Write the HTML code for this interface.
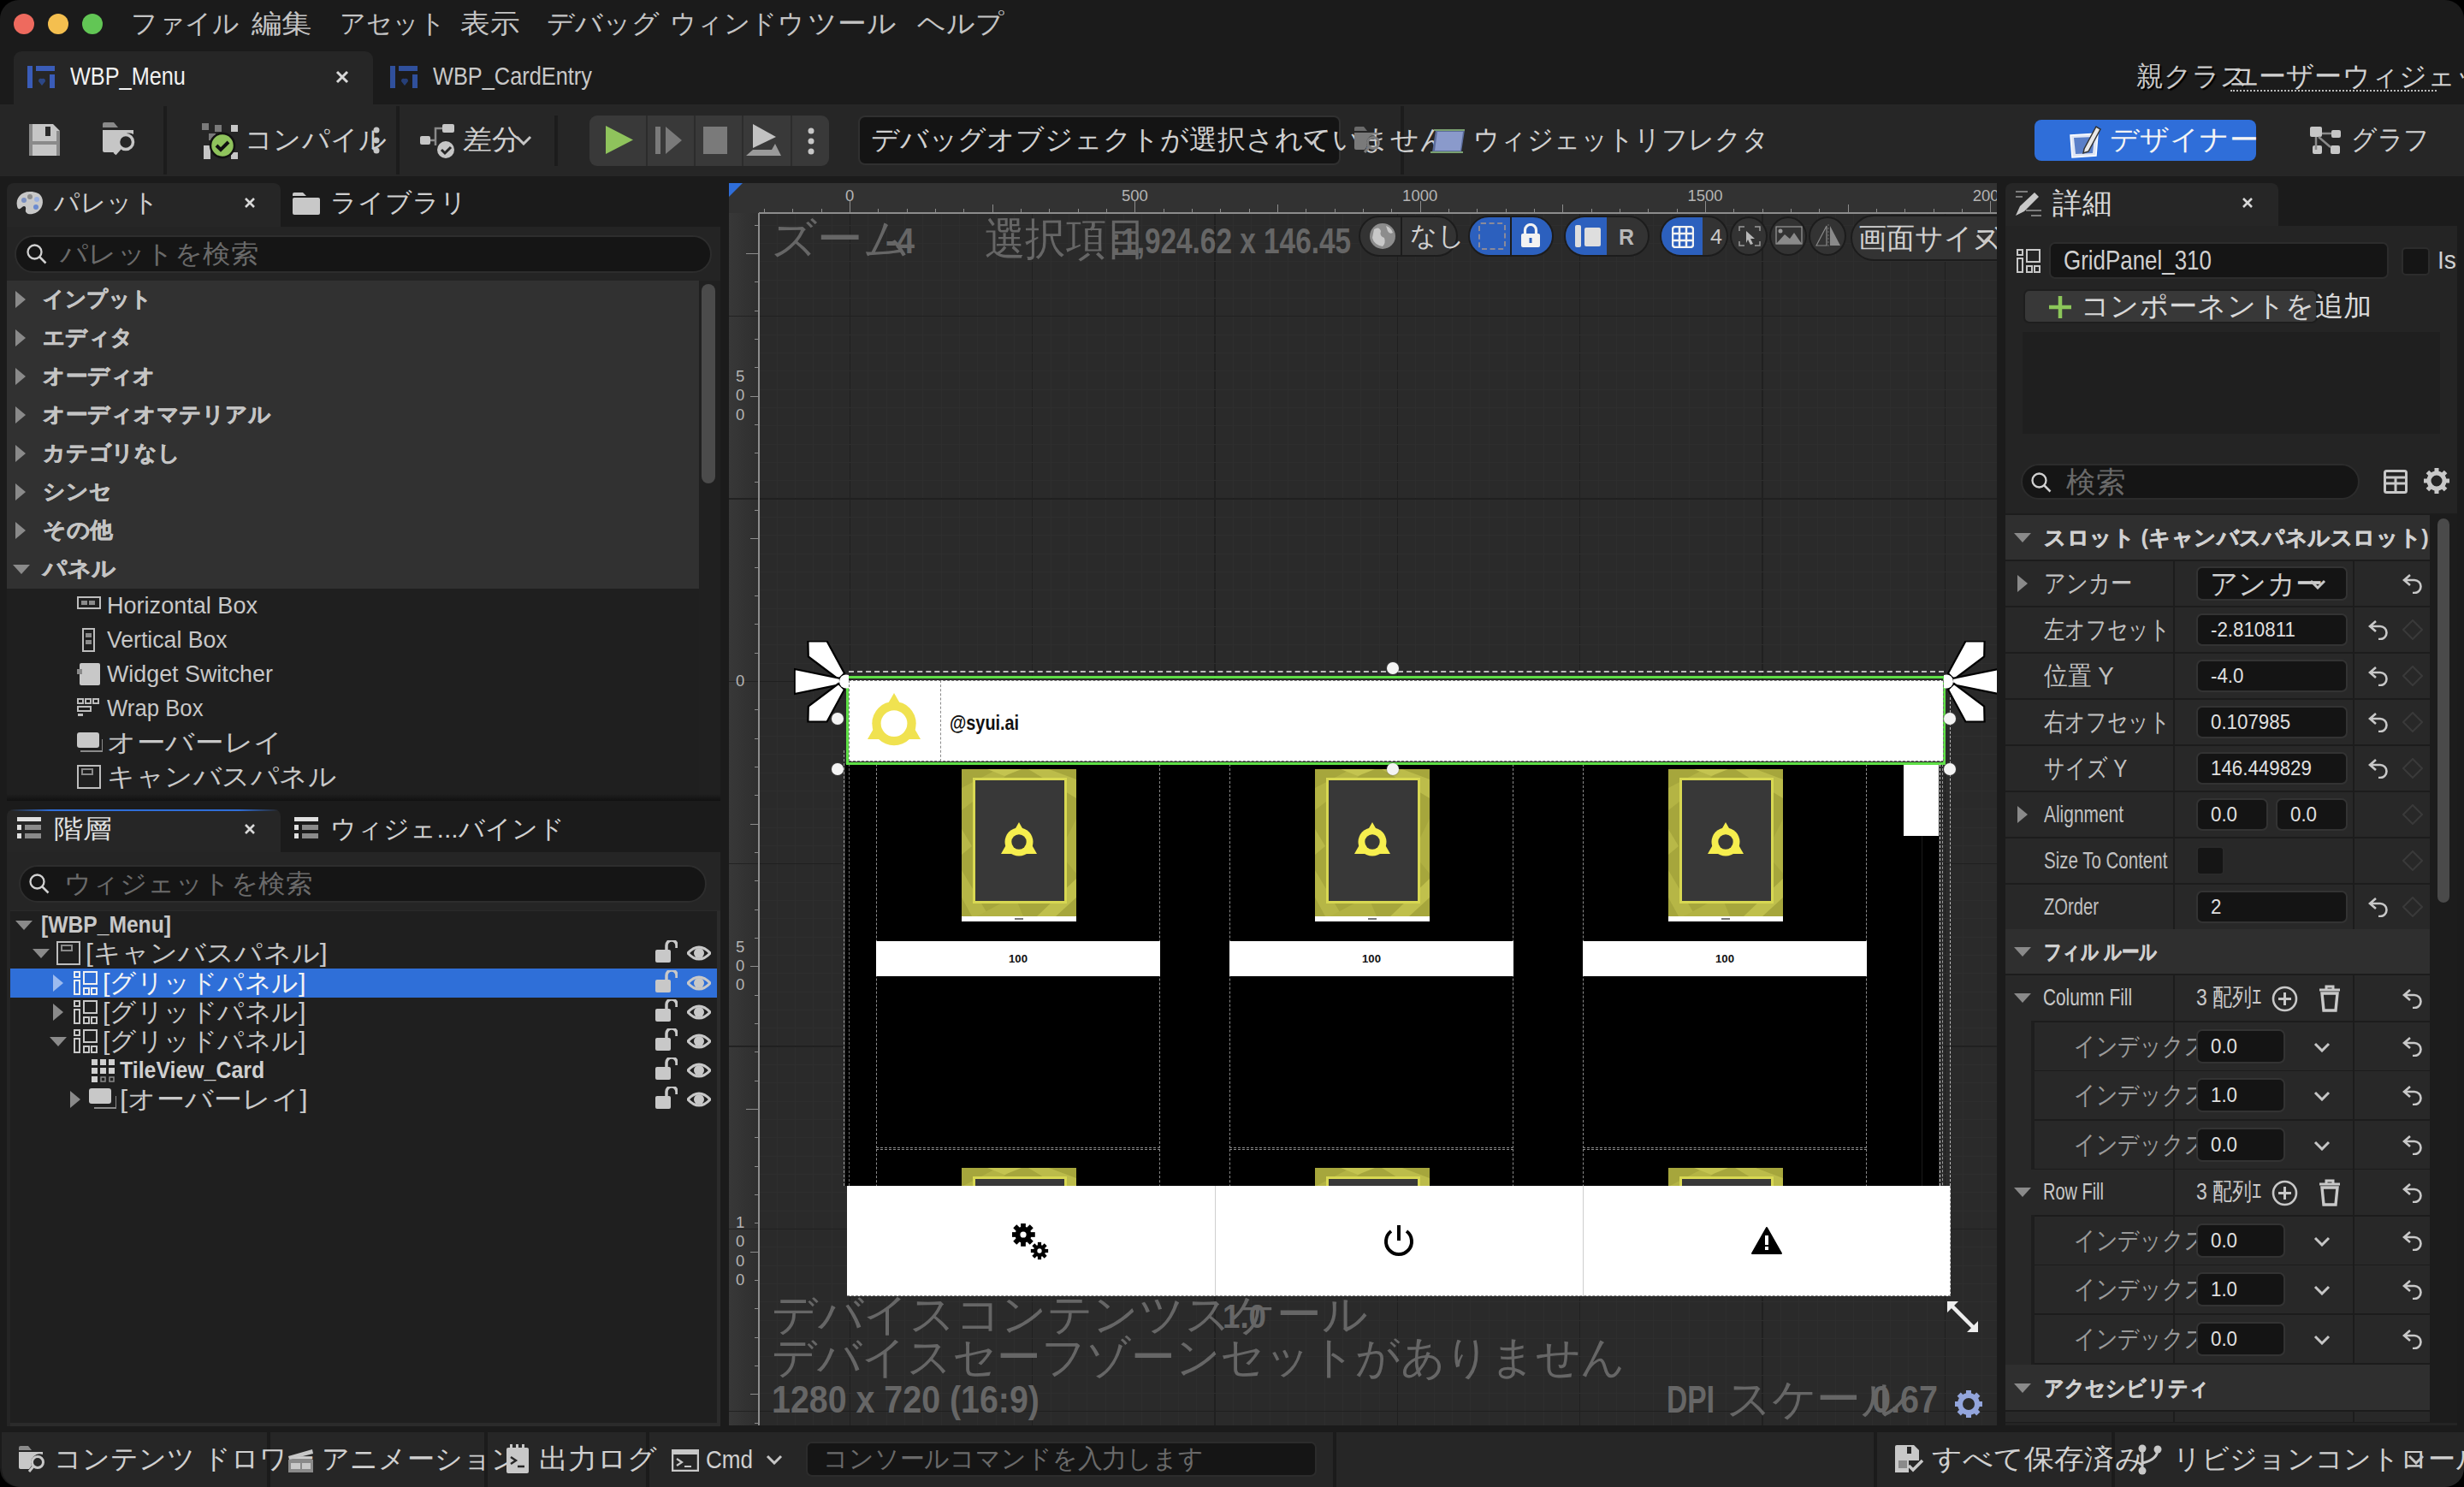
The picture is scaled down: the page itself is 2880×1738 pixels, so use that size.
<!DOCTYPE html>
<html><head><meta charset="utf-8">
<style>
*{margin:0;padding:0;box-sizing:border-box}
html,body{width:2880px;height:1738px;overflow:hidden;background:#000}
body{font-family:"Liberation Sans",sans-serif;color:#c0c0c0;position:relative}
.a{position:absolute}
.t{position:absolute;white-space:nowrap;line-height:1}
#win{position:absolute;left:0;top:0;width:2880px;height:1738px;background:#1b1b1b;border-radius:22px;overflow:hidden}
</style></head>
<body>
<div id="win">
<div class="a" style="left:16px;top:16px;width:24px;height:24px;background:#ee6a5e;border-radius:50%"></div>
<div class="a" style="left:56px;top:16px;width:24px;height:24px;background:#f4bf4f;border-radius:50%"></div>
<div class="a" style="left:96px;top:16px;width:24px;height:24px;background:#62c655;border-radius:50%"></div>
<div class="t " style="left:153.0px;top:12.4px;font-size:31.0px;color:#c4c4c4;transform:scaleX(0.989);transform-origin:0 0;">ファイル</div>
<div class="t " style="left:294.0px;top:12.4px;font-size:31.0px;color:#c4c4c4;transform:scaleX(1.140);transform-origin:0 0;">編集</div>
<div class="t " style="left:397.0px;top:12.4px;font-size:31.0px;color:#c4c4c4;transform:scaleX(0.968);transform-origin:0 0;">アセット</div>
<div class="t " style="left:538.0px;top:12.4px;font-size:31.0px;color:#c4c4c4;transform:scaleX(1.118);transform-origin:0 0;">表示</div>
<div class="t " style="left:639.0px;top:12.4px;font-size:31.0px;color:#c4c4c4;transform:scaleX(1.032);transform-origin:0 0;">デバッグ</div>
<div class="t " style="left:783.0px;top:12.4px;font-size:31.0px;color:#c4c4c4;transform:scaleX(0.981);transform-origin:0 0;">ウィンドウ</div>
<div class="t " style="left:944.0px;top:12.4px;font-size:31.0px;color:#c4c4c4;transform:scaleX(1.090);transform-origin:0 0;">ツール</div>
<div class="t " style="left:1072.0px;top:12.4px;font-size:31.0px;color:#c4c4c4;transform:scaleX(1.061);transform-origin:0 0;">ヘルプ</div>
<div class="a" style="left:16px;top:60px;width:420px;height:64px;background:#262626;border-radius:9px 9px 0 0"></div>
<svg class="a" style="left:32px;top:77px;" width="32" height="26" viewBox="0 0 32 26"><rect x="0" y="0" width="6" height="26" fill="#3a5cb8"/><rect x="10" y="0" width="22" height="6" fill="#3a5cb8"/><rect x="26" y="10" width="6" height="16" fill="#3a5cb8"/><path d="M13 18 q0-4 4-3 q4-1 4 3 l-4 5z" fill="#2c4786"/></svg>
<div class="t " style="left:82.0px;top:75.4px;font-size:29.0px;color:#f2f2f2;transform:scaleX(0.872);transform-origin:0 0;">WBP_Menu</div>
<svg class="a" style="left:392px;top:82px;" width="16" height="16" viewBox="0 0 16 16"><path d="M2 2L14 14M14 2L2 14" stroke="#d8d8d8" stroke-width="3"/></svg>
<svg class="a" style="left:456px;top:77px;" width="32" height="26" viewBox="0 0 32 26"><rect x="0" y="0" width="6" height="26" fill="#30509c"/><rect x="10" y="0" width="22" height="6" fill="#30509c"/><rect x="26" y="10" width="6" height="16" fill="#30509c"/><path d="M13 18 q0-4 4-3 q4-1 4 3 l-4 5z" fill="#263f78"/></svg>
<div class="t " style="left:506.0px;top:75.4px;font-size:29.0px;color:#c8c8c8;transform:scaleX(0.874);transform-origin:0 0;">WBP_CardEntry</div>
<div class="t " style="left:2497.0px;top:72.9px;font-size:32.0px;color:#c8c8c8;transform:scaleX(1.000);transform-origin:0 0;text-shadow:2px 2px 1px #000;">親クラス</div>
<div class="t " style="left:2607.0px;top:72.9px;font-size:32.0px;color:#d0d0d0;transform:scaleX(1.004);transform-origin:0 0;">ユーザーウィジェット</div>
<div class="a" style="left:2607px;top:105px;width:241px;height:0px;background:none;border-top:2px dotted #bbb"></div>
<div class="a" style="left:0px;top:122px;width:2880px;height:84px;background:#262626;"></div>
<div class="a" style="left:191px;top:124px;width:4px;height:80px;background:#1c1c1c;"></div>
<div class="a" style="left:463px;top:124px;width:4px;height:80px;background:#1c1c1c;"></div>
<div class="a" style="left:648px;top:135px;width:4px;height:59px;background:#1c1c1c;"></div>
<div class="a" style="left:1637px;top:124px;width:4px;height:80px;background:#1c1c1c;"></div>
<svg class="a" style="left:34px;top:145px;" width="36" height="37" viewBox="0 0 36 37"><path d="M0 2 q0-2 2-2 h26 l8 8 v27 q0 2-2 2 h-32z" fill="#c6c6c6"/><rect x="0" y="0" width="4" height="37" fill="#8a8a8a"/><rect x="32" y="8" width="4" height="29" fill="#8a8a8a"/><rect x="4" y="20" width="28" height="4" fill="#8a8a8a"/><rect x="19" y="3" width="6" height="11" fill="#2a2a2a"/></svg>
<svg class="a" style="left:120px;top:143px;" width="40" height="42" viewBox="0 0 40 42"><path d="M0 2 q0-2 2-2 h11 l5 6 h-18z" fill="#8a8a8a"/><path d="M0 9 h36 v5 a12 12 0 0 0-16 16 l-4 5 h-14 q-2 0-2-2z" fill="#c6c6c6"/><circle cx="27" cy="23" r="8.5" fill="none" stroke="#c6c6c6" stroke-width="3.5"/><path d="M21 29 l-7 8" stroke="#c6c6c6" stroke-width="4"/></svg>
<svg class="a" style="left:236px;top:144px;" width="42" height="42" viewBox="0 0 42 42"><rect x="0" y="0" width="8" height="8" fill="#7a7a7a"/><rect x="15" y="2" width="8" height="8" fill="#7a7a7a"/><rect x="34" y="2" width="8" height="8" fill="#c6c6c6"/><rect x="8" y="12" width="8" height="8" fill="#7a7a7a"/><rect x="34" y="34" width="8" height="8" fill="#c6c6c6"/><rect x="2" y="26" width="8" height="8" fill="#c6c6c6"/><rect x="2" y="34" width="8" height="8" fill="#c6c6c6"/><circle cx="24" cy="26" r="14" fill="#8fc35c" stroke="#111" stroke-width="2.5"/><path d="M17 26 l5 5 l9-9" fill="none" stroke="#111" stroke-width="4"/></svg>
<div class="t " style="left:286.0px;top:146.9px;font-size:32.0px;color:#d0d0d0;transform:scaleX(1.008);transform-origin:0 0;">コンパイル</div>
<svg class="a" style="left:434px;top:148px;" width="12" height="32" viewBox="0 0 12 32"><circle cx="6" cy="4" r="3.5" fill="#c6c6c6"/><circle cx="6" cy="16" r="3.5" fill="#c6c6c6"/><circle cx="6" cy="28" r="3.5" fill="#c6c6c6"/></svg>
<svg class="a" style="left:491px;top:145px;" width="42" height="40" viewBox="0 0 42 40"><rect x="0" y="14" width="12" height="10" rx="2" fill="#c6c6c6"/><rect x="26" y="0" width="14" height="10" rx="2" fill="#c6c6c6"/><path d="M12 19 h6 v-14 h8 M18 19 v6" fill="none" stroke="#8a8a8a" stroke-width="2.5"/><circle cx="30" cy="30" r="10" fill="#c6c6c6"/><path d="M25 30 l4 4 l7-7" fill="none" stroke="#262626" stroke-width="3"/></svg>
<div class="t " style="left:541.0px;top:146.9px;font-size:32.0px;color:#d0d0d0;transform:scaleX(1.062);transform-origin:0 0;">差分</div>
<svg class="a" style="left:602px;top:158px;" width="20" height="12" viewBox="0 0 20 12"><path d="M2 2 l8 8 l8-8" fill="none" stroke="#c6c6c6" stroke-width="3"/></svg>
<div class="a" style="left:689px;top:135px;width:280px;height:59px;background:#393939;border-radius:9px"></div>
<div class="a" style="left:755px;top:135px;width:2px;height:59px;background:#2c2c2c;"></div>
<div class="a" style="left:811px;top:135px;width:2px;height:59px;background:#2c2c2c;"></div>
<div class="a" style="left:867px;top:135px;width:2px;height:59px;background:#2c2c2c;"></div>
<div class="a" style="left:924px;top:135px;width:2px;height:59px;background:#2c2c2c;"></div>
<svg class="a" style="left:708px;top:146px;" width="32" height="35" viewBox="0 0 32 35"><path d="M0 1 L32 17.5 L0 34z" fill="#8fc35c"/></svg>
<svg class="a" style="left:766px;top:148px;" width="31" height="32" viewBox="0 0 31 32"><rect x="0" y="0" width="6" height="32" fill="#7a7a7a"/><path d="M12 0 L31 16 L12 32z" fill="#7a7a7a"/></svg>
<div class="a" style="left:822px;top:148px;width:28px;height:32px;background:#7a7a7a;"></div>
<svg class="a" style="left:872px;top:145px;" width="42" height="38" viewBox="0 0 42 38"><path d="M8 0 L35 15 L8 28z" fill="#c2c2c2"/><path d="M0 37 L8 30 h22 l4-7 l7 14z" fill="#9a9a9a"/></svg>
<svg class="a" style="left:942px;top:149px;" width="12" height="32" viewBox="0 0 12 32"><circle cx="6" cy="4" r="3.5" fill="#c6c6c6"/><circle cx="6" cy="16" r="3.5" fill="#c6c6c6"/><circle cx="6" cy="28" r="3.5" fill="#c6c6c6"/></svg>
<div class="a" style="left:1003px;top:135px;width:564px;height:58px;background:#141414;border:2px solid #303030;border-radius:8px"></div>
<div class="t " style="left:1018.0px;top:146.9px;font-size:32.0px;color:#d0d0d0;transform:scaleX(1.025);transform-origin:0 0;">デバッグオブジェクトが選択されていません</div>
<svg class="a" style="left:1523px;top:158px;" width="20" height="12" viewBox="0 0 20 12"><path d="M2 2 l8 8 l8-8" fill="none" stroke="#c6c6c6" stroke-width="3"/></svg>
<svg class="a" style="left:1583px;top:148px;" width="32" height="32" viewBox="0 0 32 32"><path d="M0 2 q0-2 2-2 h9 l4 5 h-15z" fill="#6a6a6a"/><path d="M0 7 h28 v3 a10 10 0 0 0-13 13 l-3 4 h-10 q-2 0-2-2z" fill="#7a7a7a"/><circle cx="22" cy="19" r="6.5" fill="none" stroke="#7a7a7a" stroke-width="3"/><path d="M17 24 l-5 6" stroke="#7a7a7a" stroke-width="3"/></svg>
<svg class="a" style="left:1672px;top:148px;" width="42" height="34" viewBox="0 0 42 34"><path d="M6 4 h34 l-4 26 h-34z" fill="#5a6b9a"/><path d="M8 6 h30 l-3 22 h-30z" fill="#8a9acb"/><path d="M0 30 h38 M4 4 h36" stroke="#7aa070" stroke-width="2"/></svg>
<div class="t " style="left:1722.0px;top:146.9px;font-size:32.0px;color:#d0d0d0;transform:scaleX(0.951);transform-origin:0 0;">ウィジェットリフレクタ</div>
<div class="a" style="left:2378px;top:140px;width:259px;height:48px;background:#2f6ed9;border-radius:8px"></div>
<svg class="a" style="left:2418px;top:144px;" width="42" height="42" viewBox="0 0 42 42"><path d="M2 14 l32 -2 l-2 26 l-28 2z" fill="#dfe6f5" stroke="#fff" stroke-width="1.5"/><path d="M6 17 l24-1 l-2 19 l-20 1z" fill="#5a7fc8"/><path d="M18 30 l14-26 l5 3 l-14 26 l-6 2z" fill="#e8e8e8" stroke="#333" stroke-width="1.5"/></svg>
<div class="t " style="left:2466.0px;top:146.9px;font-size:32.0px;color:#f4f4f4;transform:scaleX(1.058);transform-origin:0 0;">デザイナー</div>
<svg class="a" style="left:2700px;top:148px;" width="36" height="32" viewBox="0 0 36 32"><rect x="0" y="0" width="14" height="12" rx="2" fill="#c6c6c6"/><rect x="25" y="4" width="11" height="9" rx="2" fill="#c6c6c6"/><rect x="3" y="22" width="11" height="10" rx="2" fill="#c6c6c6"/><rect x="24" y="22" width="11" height="10" rx="2" fill="#c6c6c6"/><path d="M7 12 v15 M14 8 h11 M10 12 l14 12" stroke="#8a8a8a" stroke-width="2.5" fill="none"/></svg>
<div class="t " style="left:2748.0px;top:146.9px;font-size:32.0px;color:#d0d0d0;transform:scaleX(0.931);transform-origin:0 0;">グラフ</div>
<div class="a" style="left:8px;top:214px;width:320px;height:52px;background:#262626;border-radius:8px 8px 0 0"></div>
<svg class="a" style="left:18px;top:222px;" width="34" height="30" viewBox="0 0 34 30"><path d="M17 2 C6 2 0 10 2 19 C3 24 6 22 8 20 C10 18 13 19 12 23 C11 27 15 29 20 28 C30 26 34 16 31 9 C29 4 24 2 17 2z" fill="#c8c8c8"/><circle cx="10" cy="12" r="3" fill="#7a8fc0"/><circle cx="17" cy="8" r="3" fill="#8a8a8a"/><circle cx="25" cy="11" r="3" fill="#9ab0e0"/><circle cx="24" cy="20" r="3" fill="#6a8ad0"/></svg>
<div class="t " style="left:63.0px;top:221.9px;font-size:30.0px;color:#d0d0d0;transform:scaleX(0.989);transform-origin:0 0;">パレット</div>
<svg class="a" style="left:285px;top:230px;" width="14" height="14" viewBox="0 0 14 14"><path d="M2 2L12 12M12 2L2 12" stroke="#d8d8d8" stroke-width="2.6"/></svg>
<svg class="a" style="left:342px;top:225px;" width="32" height="26" viewBox="0 0 32 26"><path d="M0 2 q0-2 2-2 h10 l4 4 h-16z" fill="#c8c8c8"/><rect x="0" y="6" width="32" height="20" rx="2" fill="#c8c8c8"/></svg>
<div class="t " style="left:386.0px;top:221.9px;font-size:30.0px;color:#d0d0d0;transform:scaleX(1.031);transform-origin:0 0;">ライブラリ</div>
<div class="a" style="left:8px;top:265px;width:834px;height:670px;background:#242424;"></div>
<div class="a" style="left:17px;top:275px;width:815px;height:44px;background:#151515;border:2px solid #2d2d2d;border-radius:22px"></div>
<svg class="a" style="left:30px;top:284px;" width="25" height="25" viewBox="0 0 25 25"><circle cx="10.5" cy="10.5" r="8" fill="none" stroke="#d0d0d0" stroke-width="2.3"/><path d="M16.5 16.5 l7 7" stroke="#d0d0d0" stroke-width="2.5"/></svg>
<div class="t " style="left:70.0px;top:281.9px;font-size:30.0px;color:#6a6a6a;transform:scaleX(1.079);transform-origin:0 0;">パレットを検索</div>
<div class="a" style="left:8px;top:328px;width:809px;height:360px;background:#313131;"></div>
<svg class="a" style="left:18px;top:340px;" width="12" height="20" viewBox="0 0 12 20"><path d="M0 0 L12 10 L0 20z" fill="#8a8a8a"/></svg>
<div class="t " style="left:50.0px;top:337.4px;font-size:25.0px;color:#c4c4c4;font-weight:700;transform:scaleX(0.981);transform-origin:0 0;"><span style="-webkit-text-stroke:0.56px #c4c4c4">インプット</span></div>
<svg class="a" style="left:18px;top:385px;" width="12" height="20" viewBox="0 0 12 20"><path d="M0 0 L12 10 L0 20z" fill="#8a8a8a"/></svg>
<div class="t " style="left:50.0px;top:382.4px;font-size:25.0px;color:#c4c4c4;font-weight:700;transform:scaleX(1.013);transform-origin:0 0;"><span style="-webkit-text-stroke:0.56px #c4c4c4">エディタ</span></div>
<svg class="a" style="left:18px;top:430px;" width="12" height="20" viewBox="0 0 12 20"><path d="M0 0 L12 10 L0 20z" fill="#8a8a8a"/></svg>
<div class="t " style="left:50.0px;top:427.4px;font-size:25.0px;color:#c4c4c4;font-weight:700;transform:scaleX(1.024);transform-origin:0 0;"><span style="-webkit-text-stroke:0.56px #c4c4c4">オーディオ</span></div>
<svg class="a" style="left:18px;top:475px;" width="12" height="20" viewBox="0 0 12 20"><path d="M0 0 L12 10 L0 20z" fill="#8a8a8a"/></svg>
<div class="t " style="left:50.0px;top:472.4px;font-size:25.0px;color:#c4c4c4;font-weight:700;transform:scaleX(1.029);transform-origin:0 0;"><span style="-webkit-text-stroke:0.56px #c4c4c4">オーディオマテリアル</span></div>
<svg class="a" style="left:18px;top:520px;" width="12" height="20" viewBox="0 0 12 20"><path d="M0 0 L12 10 L0 20z" fill="#8a8a8a"/></svg>
<div class="t " style="left:50.0px;top:517.4px;font-size:25.0px;color:#c4c4c4;font-weight:700;transform:scaleX(1.031);transform-origin:0 0;"><span style="-webkit-text-stroke:0.56px #c4c4c4">カテゴリなし</span></div>
<svg class="a" style="left:18px;top:565px;" width="12" height="20" viewBox="0 0 12 20"><path d="M0 0 L12 10 L0 20z" fill="#8a8a8a"/></svg>
<div class="t " style="left:50.0px;top:562.4px;font-size:25.0px;color:#c4c4c4;font-weight:700;transform:scaleX(1.031);transform-origin:0 0;"><span style="-webkit-text-stroke:0.56px #c4c4c4">シンセ</span></div>
<svg class="a" style="left:18px;top:610px;" width="12" height="20" viewBox="0 0 12 20"><path d="M0 0 L12 10 L0 20z" fill="#8a8a8a"/></svg>
<div class="t " style="left:50.0px;top:607.4px;font-size:25.0px;color:#c4c4c4;font-weight:700;transform:scaleX(1.067);transform-origin:0 0;"><span style="-webkit-text-stroke:0.56px #c4c4c4">その他</span></div>
<svg class="a" style="left:15px;top:660px;" width="20" height="11" viewBox="0 0 20 11"><path d="M0 0 L20 0 L10 11z" fill="#8a8a8a"/></svg>
<div class="t " style="left:50.0px;top:652.4px;font-size:25.0px;color:#c4c4c4;font-weight:700;transform:scaleX(1.102);transform-origin:0 0;"><span style="-webkit-text-stroke:0.56px #c4c4c4">パネル</span></div>
<div class="a" style="left:817px;top:328px;width:25px;height:607px;background:#202020;"></div>
<div class="a" style="left:820px;top:332px;width:16px;height:233px;background:#4b4b4b;border-radius:8px"></div>
<div class="a" style="left:8px;top:688px;width:809px;height:247px;background:#1f1f1f;"></div>
<svg class="a" style="left:90px;top:694px;" width="30" height="28" viewBox="0 0 30 28"><rect x="1" y="4" width="26" height="13" fill="none" stroke="#bdbdbd" stroke-width="2"/><rect x="5" y="8" width="7" height="5" fill="#8a8a8a"/><rect x="14" y="8" width="7" height="5" fill="#8a8a8a"/></svg>
<div class="t " style="left:125.0px;top:694.2px;font-size:27.5px;color:#c8c8c8;transform:scaleX(0.984);transform-origin:0 0;">Horizontal Box</div>
<svg class="a" style="left:90px;top:734px;" width="30" height="28" viewBox="0 0 30 28"><rect x="7" y="1" width="13" height="26" fill="none" stroke="#bdbdbd" stroke-width="2"/><rect x="10" y="6" width="7" height="5" fill="#8a8a8a"/><rect x="10" y="14" width="7" height="5" fill="#8a8a8a"/></svg>
<div class="t " style="left:125.0px;top:734.2px;font-size:27.5px;color:#c8c8c8;transform:scaleX(0.968);transform-origin:0 0;">Vertical Box</div>
<svg class="a" style="left:90px;top:774px;" width="30" height="28" viewBox="0 0 30 28"><rect x="3" y="1" width="24" height="26" rx="2" fill="#c8c8c8"/><rect x="0" y="8" width="6" height="6" fill="#8a8a8a"/></svg>
<div class="t " style="left:125.0px;top:774.2px;font-size:27.5px;color:#c8c8c8;transform:scaleX(0.976);transform-origin:0 0;">Widget Switcher</div>
<svg class="a" style="left:90px;top:814px;" width="30" height="28" viewBox="0 0 30 28"><rect x="1" y="3" width="6" height="5" fill="none" stroke="#bdbdbd" stroke-width="2"/><rect x="10" y="3" width="6" height="5" fill="none" stroke="#bdbdbd" stroke-width="2"/><rect x="19" y="3" width="6" height="5" fill="none" stroke="#bdbdbd" stroke-width="2"/><rect x="1" y="12" width="15" height="5" fill="none" stroke="#bdbdbd" stroke-width="2"/><rect x="1" y="20" width="6" height="3" fill="#bdbdbd"/></svg>
<div class="t " style="left:125.0px;top:814.2px;font-size:27.5px;color:#c8c8c8;transform:scaleX(0.936);transform-origin:0 0;">Wrap Box</div>
<svg class="a" style="left:90px;top:854px;" width="30" height="28" viewBox="0 0 30 28"><rect x="0" y="2" width="26" height="18" rx="3" fill="#c8c8c8"/><path d="M4 24 h26 v-14" fill="none" stroke="#8a8a8a" stroke-width="2"/></svg>
<div class="t " style="left:125.0px;top:852.9px;font-size:30.0px;color:#c8c8c8;transform:scaleX(1.119);transform-origin:0 0;">オーバーレイ</div>
<svg class="a" style="left:90px;top:894px;" width="30" height="28" viewBox="0 0 30 28"><rect x="1" y="1" width="26" height="26" fill="none" stroke="#bdbdbd" stroke-width="2"/><rect x="6" y="5" width="12" height="6" fill="none" stroke="#8a8a8a" stroke-width="2"/></svg>
<div class="t " style="left:125.0px;top:892.9px;font-size:30.0px;color:#c8c8c8;transform:scaleX(1.083);transform-origin:0 0;">キャンバスパネル</div>
<div class="a" style="left:8px;top:928px;width:834px;height:8px;background:linear-gradient(#1f1f1f00,#111);"></div>
<div class="a" style="left:8px;top:946px;width:320px;height:50px;background:#262626;border-radius:8px 8px 0 0"></div>
<div class="a" style="left:12px;top:946px;width:314px;height:2px;background:linear-gradient(to right,#2f6ed900,#2f6ed9 15%,#2f6ed9 85%,#2f6ed900);"></div>
<svg class="a" style="left:20px;top:955px;" width="28" height="26" viewBox="0 0 28 26"><rect x="0" y="0" width="28" height="5" fill="#e0e0e0"/><rect x="0" y="9" width="5" height="6" fill="#e0e0e0"/><rect x="9" y="9" width="19" height="6" fill="#8a8a8a"/><rect x="0" y="19" width="5" height="6" fill="#e0e0e0"/><rect x="9" y="19" width="19" height="6" fill="#8a8a8a"/></svg>
<div class="t " style="left:63.0px;top:953.9px;font-size:30.0px;color:#e0e0e0;transform:scaleX(1.133);transform-origin:0 0;">階層</div>
<svg class="a" style="left:285px;top:962px;" width="14" height="14" viewBox="0 0 14 14"><path d="M2 2L12 12M12 2L2 12" stroke="#d8d8d8" stroke-width="2.6"/></svg>
<svg class="a" style="left:344px;top:955px;" width="28" height="26" viewBox="0 0 28 26"><rect x="0" y="0" width="28" height="5" fill="#e0e0e0"/><rect x="0" y="9" width="5" height="6" fill="#e0e0e0"/><rect x="9" y="9" width="19" height="6" fill="#8a8a8a"/><rect x="0" y="19" width="5" height="6" fill="#e0e0e0"/><rect x="9" y="19" width="19" height="6" fill="#8a8a8a"/></svg>
<div class="t " style="left:386.0px;top:953.9px;font-size:30.0px;color:#d0d0d0;transform:scaleX(1.005);transform-origin:0 0;">ウィジェ...バインド</div>
<div class="a" style="left:8px;top:996px;width:834px;height:671px;background:#252525;"></div>
<div class="a" style="left:22px;top:1011px;width:804px;height:44px;background:#151515;border:2px solid #2d2d2d;border-radius:22px"></div>
<svg class="a" style="left:33px;top:1020px;" width="25" height="25" viewBox="0 0 25 25"><circle cx="10.5" cy="10.5" r="8" fill="none" stroke="#d0d0d0" stroke-width="2.3"/><path d="M16.5 16.5 l7 7" stroke="#d0d0d0" stroke-width="2.5"/></svg>
<div class="t " style="left:75.0px;top:1017.9px;font-size:30.0px;color:#6a6a6a;transform:scaleX(1.047);transform-origin:0 0;">ウィジェットを検索</div>
<div class="a" style="left:12px;top:1064px;width:830px;height:603px;background:#1f1f1f;border-right:4px solid #2b2b2b;border-bottom:4px solid #2b2b2b;border-top:1px solid #2a2a2a"></div>
<svg class="a" style="left:18px;top:1076px;" width="20" height="11" viewBox="0 0 20 11"><path d="M0 0 L20 0 L10 11z" fill="#8a8a8a"/></svg>
<div class="t " style="left:48.0px;top:1066.9px;font-size:28.0px;color:#c8c8c8;font-weight:700;transform:scaleX(0.880);transform-origin:0 0;">[WBP_Menu]</div>
<svg class="a" style="left:38px;top:1109px;" width="20" height="11" viewBox="0 0 20 11"><path d="M0 0 L20 0 L10 11z" fill="#8a8a8a"/></svg>
<svg class="a" style="left:66px;top:1100px;" width="28" height="28" viewBox="0 0 28 28"><rect x="1" y="1" width="26" height="26" fill="none" stroke="#bdbdbd" stroke-width="2"/><rect x="6" y="5" width="12" height="6" fill="none" stroke="#8a8a8a" stroke-width="2"/></svg>
<div class="t " style="left:100.0px;top:1098.9px;font-size:30.0px;color:#c8c8c8;transform:scaleX(1.068);transform-origin:0 0;">[キャンバスパネル]</div>
<div class="a" style="left:12px;top:1132px;width:826px;height:34px;background:#2f6fd8;"></div>
<svg class="a" style="left:62px;top:1139px;" width="12" height="20" viewBox="0 0 12 20"><path d="M0 0 L12 10 L0 20z" fill="#9cbbef"/></svg>
<svg class="a" style="left:86px;top:1135px;" width="28" height="28" viewBox="0 0 28 28"><rect x="1" y="1" width="6" height="6" fill="none" stroke="#f0f0f0" stroke-width="2"/><rect x="12" y="1" width="15" height="14" fill="none" stroke="#f0f0f0" stroke-width="2"/><rect x="1" y="11" width="6" height="16" fill="none" stroke="#f0f0f0" stroke-width="2"/><rect x="12" y="20" width="6" height="7" fill="none" stroke="#f0f0f0" stroke-width="2"/><rect x="21" y="20" width="6" height="7" fill="none" stroke="#f0f0f0" stroke-width="2"/></svg>
<div class="t " style="left:120.0px;top:1133.9px;font-size:30.0px;color:#f4f4f4;transform:scaleX(1.016);transform-origin:0 0;">[グリッドパネル]</div>
<svg class="a" style="left:62px;top:1173px;" width="12" height="20" viewBox="0 0 12 20"><path d="M0 0 L12 10 L0 20z" fill="#8a8a8a"/></svg>
<svg class="a" style="left:86px;top:1169px;" width="28" height="28" viewBox="0 0 28 28"><rect x="1" y="1" width="6" height="6" fill="none" stroke="#c8c8c8" stroke-width="2"/><rect x="12" y="1" width="15" height="14" fill="none" stroke="#c8c8c8" stroke-width="2"/><rect x="1" y="11" width="6" height="16" fill="none" stroke="#c8c8c8" stroke-width="2"/><rect x="12" y="20" width="6" height="7" fill="none" stroke="#c8c8c8" stroke-width="2"/><rect x="21" y="20" width="6" height="7" fill="none" stroke="#c8c8c8" stroke-width="2"/></svg>
<div class="t " style="left:120.0px;top:1167.9px;font-size:30.0px;color:#c8c8c8;transform:scaleX(1.016);transform-origin:0 0;">[グリッドパネル]</div>
<svg class="a" style="left:58px;top:1212px;" width="20" height="11" viewBox="0 0 20 11"><path d="M0 0 L20 0 L10 11z" fill="#8a8a8a"/></svg>
<svg class="a" style="left:86px;top:1203px;" width="28" height="28" viewBox="0 0 28 28"><rect x="1" y="1" width="6" height="6" fill="none" stroke="#c8c8c8" stroke-width="2"/><rect x="12" y="1" width="15" height="14" fill="none" stroke="#c8c8c8" stroke-width="2"/><rect x="1" y="11" width="6" height="16" fill="none" stroke="#c8c8c8" stroke-width="2"/><rect x="12" y="20" width="6" height="7" fill="none" stroke="#c8c8c8" stroke-width="2"/><rect x="21" y="20" width="6" height="7" fill="none" stroke="#c8c8c8" stroke-width="2"/></svg>
<div class="t " style="left:120.0px;top:1201.9px;font-size:30.0px;color:#c8c8c8;transform:scaleX(1.016);transform-origin:0 0;">[グリッドパネル]</div>
<svg class="a" style="left:106px;top:1237px;" width="28" height="28" viewBox="0 0 28 28"><rect x="1" y="1" width="7" height="7" fill="#d0d0d0"/><rect x="11" y="1" width="7" height="7" fill="#d0d0d0"/><rect x="21" y="1" width="7" height="7" fill="#d0d0d0"/><rect x="1" y="11" width="7" height="7" fill="#d0d0d0"/><rect x="11" y="11" width="7" height="7" fill="#d0d0d0"/><rect x="21" y="11" width="7" height="7" fill="#d0d0d0"/><rect x="1" y="21" width="7" height="7" fill="none"/><rect x="11" y="21" width="7" height="7" fill="none"/><rect x="21" y="21" width="7" height="7" fill="none"/><rect x="12" y="22" width="5" height="5" fill="none" stroke="#8a8a8a" stroke-width="1.5"/><rect x="22" y="22" width="5" height="5" fill="none" stroke="#8a8a8a" stroke-width="1.5"/><rect x="1" y="21" width="7" height="7" fill="#d0d0d0"/></svg>
<div class="t " style="left:140.0px;top:1236.9px;font-size:28.0px;color:#d0d0d0;font-weight:700;transform:scaleX(0.888);transform-origin:0 0;">TileView_Card</div>
<svg class="a" style="left:82px;top:1275px;" width="12" height="20" viewBox="0 0 12 20"><path d="M0 0 L12 10 L0 20z" fill="#8a8a8a"/></svg>
<svg class="a" style="left:104px;top:1271px;" width="32" height="28" viewBox="0 0 32 28"><rect x="0" y="1" width="26" height="18" rx="3" fill="#c8c8c8"/><path d="M6 24 h26 v-14" fill="none" stroke="#8a8a8a" stroke-width="2"/></svg>
<div class="t " style="left:140.0px;top:1269.9px;font-size:30.0px;color:#c8c8c8;transform:scaleX(1.094);transform-origin:0 0;">[オーバーレイ]</div>
<svg class="a" style="left:766px;top:1099px;" width="26" height="26" viewBox="0 0 26 26"><rect x="0" y="11" width="18" height="15" rx="2" fill="#c8c8c8"/><path d="M13 11 v-5 a6 6 0 0 1 12 0 v3" fill="none" stroke="#c8c8c8" stroke-width="3.5"/></svg>
<svg class="a" style="left:803px;top:1102px;" width="28" height="24" viewBox="0 0 28 24"><path d="M1 12 Q14 -2 27 12 Q14 26 1 12z" fill="none" stroke="#c8c8c8" stroke-width="3"/><circle cx="14" cy="12" r="6" fill="#c8c8c8"/></svg>
<svg class="a" style="left:766px;top:1134px;" width="26" height="26" viewBox="0 0 26 26"><rect x="0" y="11" width="18" height="15" rx="2" fill="#c8c8c8"/><path d="M13 11 v-5 a6 6 0 0 1 12 0 v3" fill="none" stroke="#c8c8c8" stroke-width="3.5"/></svg>
<svg class="a" style="left:803px;top:1137px;" width="28" height="24" viewBox="0 0 28 24"><path d="M1 12 Q14 -2 27 12 Q14 26 1 12z" fill="none" stroke="#c8c8c8" stroke-width="3"/><circle cx="14" cy="12" r="6" fill="#c8c8c8"/></svg>
<svg class="a" style="left:766px;top:1168px;" width="26" height="26" viewBox="0 0 26 26"><rect x="0" y="11" width="18" height="15" rx="2" fill="#c8c8c8"/><path d="M13 11 v-5 a6 6 0 0 1 12 0 v3" fill="none" stroke="#c8c8c8" stroke-width="3.5"/></svg>
<svg class="a" style="left:803px;top:1171px;" width="28" height="24" viewBox="0 0 28 24"><path d="M1 12 Q14 -2 27 12 Q14 26 1 12z" fill="none" stroke="#c8c8c8" stroke-width="3"/><circle cx="14" cy="12" r="6" fill="#c8c8c8"/></svg>
<svg class="a" style="left:766px;top:1202px;" width="26" height="26" viewBox="0 0 26 26"><rect x="0" y="11" width="18" height="15" rx="2" fill="#c8c8c8"/><path d="M13 11 v-5 a6 6 0 0 1 12 0 v3" fill="none" stroke="#c8c8c8" stroke-width="3.5"/></svg>
<svg class="a" style="left:803px;top:1205px;" width="28" height="24" viewBox="0 0 28 24"><path d="M1 12 Q14 -2 27 12 Q14 26 1 12z" fill="none" stroke="#c8c8c8" stroke-width="3"/><circle cx="14" cy="12" r="6" fill="#c8c8c8"/></svg>
<svg class="a" style="left:766px;top:1236px;" width="26" height="26" viewBox="0 0 26 26"><rect x="0" y="11" width="18" height="15" rx="2" fill="#c8c8c8"/><path d="M13 11 v-5 a6 6 0 0 1 12 0 v3" fill="none" stroke="#c8c8c8" stroke-width="3.5"/></svg>
<svg class="a" style="left:803px;top:1239px;" width="28" height="24" viewBox="0 0 28 24"><path d="M1 12 Q14 -2 27 12 Q14 26 1 12z" fill="none" stroke="#c8c8c8" stroke-width="3"/><circle cx="14" cy="12" r="6" fill="#c8c8c8"/></svg>
<svg class="a" style="left:766px;top:1270px;" width="26" height="26" viewBox="0 0 26 26"><rect x="0" y="11" width="18" height="15" rx="2" fill="#c8c8c8"/><path d="M13 11 v-5 a6 6 0 0 1 12 0 v3" fill="none" stroke="#c8c8c8" stroke-width="3.5"/></svg>
<svg class="a" style="left:803px;top:1273px;" width="28" height="24" viewBox="0 0 28 24"><path d="M1 12 Q14 -2 27 12 Q14 26 1 12z" fill="none" stroke="#c8c8c8" stroke-width="3"/><circle cx="14" cy="12" r="6" fill="#c8c8c8"/></svg>
<div class="a" style="left:852px;top:214px;width:1482px;height:1452px;background:#2a2a2a;overflow:hidden">
<svg class="a" style="left:0px;top:0px;shape-rendering:crispEdges" width="1482" height="1452" viewBox="0 0 1482 1452"><rect x="13.0" y="0" width="1" height="1452" fill="#2e2e2e"/><rect x="34.3" y="0" width="1" height="1452" fill="#2e2e2e"/><rect x="55.7" y="0" width="1" height="1452" fill="#2e2e2e"/><rect x="77.0" y="0" width="1" height="1452" fill="#2e2e2e"/><rect x="98.3" y="0" width="1" height="1452" fill="#2e2e2e"/><rect x="119.7" y="0" width="1" height="1452" fill="#2e2e2e"/><rect x="140.5" y="0" width="1.5" height="1452" fill="#202020"/><rect x="162.3" y="0" width="1" height="1452" fill="#2e2e2e"/><rect x="183.7" y="0" width="1" height="1452" fill="#2e2e2e"/><rect x="205.0" y="0" width="1" height="1452" fill="#2e2e2e"/><rect x="226.3" y="0" width="1" height="1452" fill="#2e2e2e"/><rect x="247.7" y="0" width="1" height="1452" fill="#2e2e2e"/><rect x="269.0" y="0" width="1" height="1452" fill="#2e2e2e"/><rect x="290.3" y="0" width="1" height="1452" fill="#2e2e2e"/><rect x="311.7" y="0" width="1" height="1452" fill="#2e2e2e"/><rect x="333.0" y="0" width="1" height="1452" fill="#2e2e2e"/><rect x="353.8" y="0" width="1.5" height="1452" fill="#202020"/><rect x="375.7" y="0" width="1" height="1452" fill="#2e2e2e"/><rect x="397.0" y="0" width="1" height="1452" fill="#2e2e2e"/><rect x="418.3" y="0" width="1" height="1452" fill="#2e2e2e"/><rect x="439.7" y="0" width="1" height="1452" fill="#2e2e2e"/><rect x="461.0" y="0" width="1" height="1452" fill="#2e2e2e"/><rect x="482.3" y="0" width="1" height="1452" fill="#2e2e2e"/><rect x="503.7" y="0" width="1" height="1452" fill="#2e2e2e"/><rect x="525.0" y="0" width="1" height="1452" fill="#2e2e2e"/><rect x="546.3" y="0" width="1" height="1452" fill="#2e2e2e"/><rect x="567.2" y="0" width="1.5" height="1452" fill="#202020"/><rect x="589.0" y="0" width="1" height="1452" fill="#2e2e2e"/><rect x="610.3" y="0" width="1" height="1452" fill="#2e2e2e"/><rect x="631.7" y="0" width="1" height="1452" fill="#2e2e2e"/><rect x="653.0" y="0" width="1" height="1452" fill="#2e2e2e"/><rect x="674.3" y="0" width="1" height="1452" fill="#2e2e2e"/><rect x="695.7" y="0" width="1" height="1452" fill="#2e2e2e"/><rect x="717.0" y="0" width="1" height="1452" fill="#2e2e2e"/><rect x="738.3" y="0" width="1" height="1452" fill="#2e2e2e"/><rect x="759.7" y="0" width="1" height="1452" fill="#2e2e2e"/><rect x="780.5" y="0" width="1.5" height="1452" fill="#202020"/><rect x="802.3" y="0" width="1" height="1452" fill="#2e2e2e"/><rect x="823.7" y="0" width="1" height="1452" fill="#2e2e2e"/><rect x="845.0" y="0" width="1" height="1452" fill="#2e2e2e"/><rect x="866.3" y="0" width="1" height="1452" fill="#2e2e2e"/><rect x="887.7" y="0" width="1" height="1452" fill="#2e2e2e"/><rect x="909.0" y="0" width="1" height="1452" fill="#2e2e2e"/><rect x="930.3" y="0" width="1" height="1452" fill="#2e2e2e"/><rect x="951.7" y="0" width="1" height="1452" fill="#2e2e2e"/><rect x="973.0" y="0" width="1" height="1452" fill="#2e2e2e"/><rect x="993.8" y="0" width="1.5" height="1452" fill="#202020"/><rect x="1015.7" y="0" width="1" height="1452" fill="#2e2e2e"/><rect x="1037.0" y="0" width="1" height="1452" fill="#2e2e2e"/><rect x="1058.3" y="0" width="1" height="1452" fill="#2e2e2e"/><rect x="1079.7" y="0" width="1" height="1452" fill="#2e2e2e"/><rect x="1101.0" y="0" width="1" height="1452" fill="#2e2e2e"/><rect x="1122.3" y="0" width="1" height="1452" fill="#2e2e2e"/><rect x="1143.7" y="0" width="1" height="1452" fill="#2e2e2e"/><rect x="1165.0" y="0" width="1" height="1452" fill="#2e2e2e"/><rect x="1186.3" y="0" width="1" height="1452" fill="#2e2e2e"/><rect x="1207.2" y="0" width="1.5" height="1452" fill="#202020"/><rect x="1229.0" y="0" width="1" height="1452" fill="#2e2e2e"/><rect x="1250.3" y="0" width="1" height="1452" fill="#2e2e2e"/><rect x="1271.7" y="0" width="1" height="1452" fill="#2e2e2e"/><rect x="1293.0" y="0" width="1" height="1452" fill="#2e2e2e"/><rect x="1314.3" y="0" width="1" height="1452" fill="#2e2e2e"/><rect x="1335.7" y="0" width="1" height="1452" fill="#2e2e2e"/><rect x="1357.0" y="0" width="1" height="1452" fill="#2e2e2e"/><rect x="1378.3" y="0" width="1" height="1452" fill="#2e2e2e"/><rect x="1399.7" y="0" width="1" height="1452" fill="#2e2e2e"/><rect x="1420.5" y="0" width="1.5" height="1452" fill="#202020"/><rect x="1442.3" y="0" width="1" height="1452" fill="#2e2e2e"/><rect x="1463.7" y="0" width="1" height="1452" fill="#2e2e2e"/><rect x="0" y="6.0" width="1482" height="1" fill="#2e2e2e"/><rect x="0" y="27.3" width="1482" height="1" fill="#2e2e2e"/><rect x="0" y="48.7" width="1482" height="1" fill="#2e2e2e"/><rect x="0" y="70.0" width="1482" height="1" fill="#2e2e2e"/><rect x="0" y="91.3" width="1482" height="1" fill="#2e2e2e"/><rect x="0" y="112.7" width="1482" height="1" fill="#2e2e2e"/><rect x="0" y="134.0" width="1482" height="1" fill="#2e2e2e"/><rect x="0" y="154.8" width="1482" height="1.5" fill="#202020"/><rect x="0" y="176.7" width="1482" height="1" fill="#2e2e2e"/><rect x="0" y="198.0" width="1482" height="1" fill="#2e2e2e"/><rect x="0" y="219.3" width="1482" height="1" fill="#2e2e2e"/><rect x="0" y="240.7" width="1482" height="1" fill="#2e2e2e"/><rect x="0" y="262.0" width="1482" height="1" fill="#2e2e2e"/><rect x="0" y="283.3" width="1482" height="1" fill="#2e2e2e"/><rect x="0" y="304.7" width="1482" height="1" fill="#2e2e2e"/><rect x="0" y="326.0" width="1482" height="1" fill="#2e2e2e"/><rect x="0" y="347.3" width="1482" height="1" fill="#2e2e2e"/><rect x="0" y="368.2" width="1482" height="1.5" fill="#202020"/><rect x="0" y="390.0" width="1482" height="1" fill="#2e2e2e"/><rect x="0" y="411.3" width="1482" height="1" fill="#2e2e2e"/><rect x="0" y="432.7" width="1482" height="1" fill="#2e2e2e"/><rect x="0" y="454.0" width="1482" height="1" fill="#2e2e2e"/><rect x="0" y="475.3" width="1482" height="1" fill="#2e2e2e"/><rect x="0" y="496.7" width="1482" height="1" fill="#2e2e2e"/><rect x="0" y="518.0" width="1482" height="1" fill="#2e2e2e"/><rect x="0" y="539.3" width="1482" height="1" fill="#2e2e2e"/><rect x="0" y="560.7" width="1482" height="1" fill="#2e2e2e"/><rect x="0" y="581.5" width="1482" height="1.5" fill="#202020"/><rect x="0" y="603.3" width="1482" height="1" fill="#2e2e2e"/><rect x="0" y="624.7" width="1482" height="1" fill="#2e2e2e"/><rect x="0" y="646.0" width="1482" height="1" fill="#2e2e2e"/><rect x="0" y="667.3" width="1482" height="1" fill="#2e2e2e"/><rect x="0" y="688.7" width="1482" height="1" fill="#2e2e2e"/><rect x="0" y="710.0" width="1482" height="1" fill="#2e2e2e"/><rect x="0" y="731.3" width="1482" height="1" fill="#2e2e2e"/><rect x="0" y="752.7" width="1482" height="1" fill="#2e2e2e"/><rect x="0" y="774.0" width="1482" height="1" fill="#2e2e2e"/><rect x="0" y="794.8" width="1482" height="1.5" fill="#202020"/><rect x="0" y="816.7" width="1482" height="1" fill="#2e2e2e"/><rect x="0" y="838.0" width="1482" height="1" fill="#2e2e2e"/><rect x="0" y="859.3" width="1482" height="1" fill="#2e2e2e"/><rect x="0" y="880.7" width="1482" height="1" fill="#2e2e2e"/><rect x="0" y="902.0" width="1482" height="1" fill="#2e2e2e"/><rect x="0" y="923.3" width="1482" height="1" fill="#2e2e2e"/><rect x="0" y="944.7" width="1482" height="1" fill="#2e2e2e"/><rect x="0" y="966.0" width="1482" height="1" fill="#2e2e2e"/><rect x="0" y="987.3" width="1482" height="1" fill="#2e2e2e"/><rect x="0" y="1008.2" width="1482" height="1.5" fill="#202020"/><rect x="0" y="1030.0" width="1482" height="1" fill="#2e2e2e"/><rect x="0" y="1051.3" width="1482" height="1" fill="#2e2e2e"/><rect x="0" y="1072.7" width="1482" height="1" fill="#2e2e2e"/><rect x="0" y="1094.0" width="1482" height="1" fill="#2e2e2e"/><rect x="0" y="1115.3" width="1482" height="1" fill="#2e2e2e"/><rect x="0" y="1136.7" width="1482" height="1" fill="#2e2e2e"/><rect x="0" y="1158.0" width="1482" height="1" fill="#2e2e2e"/><rect x="0" y="1179.3" width="1482" height="1" fill="#2e2e2e"/><rect x="0" y="1200.7" width="1482" height="1" fill="#2e2e2e"/><rect x="0" y="1221.5" width="1482" height="1.5" fill="#202020"/><rect x="0" y="1243.3" width="1482" height="1" fill="#2e2e2e"/><rect x="0" y="1264.7" width="1482" height="1" fill="#2e2e2e"/><rect x="0" y="1286.0" width="1482" height="1" fill="#2e2e2e"/><rect x="0" y="1307.3" width="1482" height="1" fill="#2e2e2e"/><rect x="0" y="1328.7" width="1482" height="1" fill="#2e2e2e"/><rect x="0" y="1350.0" width="1482" height="1" fill="#2e2e2e"/><rect x="0" y="1371.3" width="1482" height="1" fill="#2e2e2e"/><rect x="0" y="1392.7" width="1482" height="1" fill="#2e2e2e"/><rect x="0" y="1414.0" width="1482" height="1" fill="#2e2e2e"/><rect x="0" y="1434.8" width="1482" height="1.5" fill="#202020"/></svg>
<div class="a" style="left:0px;top:0px;width:1482px;height:35px;background:#323232;"></div>
<div class="a" style="left:0px;top:0px;width:35px;height:1452px;background:linear-gradient(to right,#383838,#2e2e2e);"></div>
<div class="a" style="left:0px;top:0px;width:35px;height:35px;background:#323232;"></div>
<svg class="a" style="left:0px;top:0px;" width="16" height="16" viewBox="0 0 16 16"><path d="M0 0 H16 L0 16z" fill="#2f6ed9"/></svg>
<svg class="a" style="left:0px;top:0px;shape-rendering:crispEdges" width="1482" height="1452" viewBox="0 0 1482 1452"><rect x="35" y="34" width="1447" height="1.5" fill="#8c8c8c"/><rect x="41.0" y="30" width="1" height="5" fill="#8c8c8c"/><rect x="74.3" y="30" width="1" height="5" fill="#8c8c8c"/><rect x="107.7" y="30" width="1" height="5" fill="#8c8c8c"/><rect x="141.0" y="21" width="1" height="14" fill="#8c8c8c"/><rect x="174.3" y="30" width="1" height="5" fill="#8c8c8c"/><rect x="207.7" y="30" width="1" height="5" fill="#8c8c8c"/><rect x="241.0" y="30" width="1" height="5" fill="#8c8c8c"/><rect x="274.3" y="30" width="1" height="5" fill="#8c8c8c"/><rect x="307.7" y="25" width="1" height="10" fill="#8c8c8c"/><rect x="341.0" y="30" width="1" height="5" fill="#8c8c8c"/><rect x="374.3" y="30" width="1" height="5" fill="#8c8c8c"/><rect x="407.7" y="30" width="1" height="5" fill="#8c8c8c"/><rect x="441.0" y="30" width="1" height="5" fill="#8c8c8c"/><rect x="474.3" y="21" width="1" height="14" fill="#8c8c8c"/><rect x="507.7" y="30" width="1" height="5" fill="#8c8c8c"/><rect x="541.0" y="30" width="1" height="5" fill="#8c8c8c"/><rect x="574.3" y="30" width="1" height="5" fill="#8c8c8c"/><rect x="607.7" y="30" width="1" height="5" fill="#8c8c8c"/><rect x="641.0" y="25" width="1" height="10" fill="#8c8c8c"/><rect x="674.3" y="30" width="1" height="5" fill="#8c8c8c"/><rect x="707.7" y="30" width="1" height="5" fill="#8c8c8c"/><rect x="741.0" y="30" width="1" height="5" fill="#8c8c8c"/><rect x="774.3" y="30" width="1" height="5" fill="#8c8c8c"/><rect x="807.7" y="21" width="1" height="14" fill="#8c8c8c"/><rect x="841.0" y="30" width="1" height="5" fill="#8c8c8c"/><rect x="874.3" y="30" width="1" height="5" fill="#8c8c8c"/><rect x="907.7" y="30" width="1" height="5" fill="#8c8c8c"/><rect x="941.0" y="30" width="1" height="5" fill="#8c8c8c"/><rect x="974.3" y="25" width="1" height="10" fill="#8c8c8c"/><rect x="1007.7" y="30" width="1" height="5" fill="#8c8c8c"/><rect x="1041.0" y="30" width="1" height="5" fill="#8c8c8c"/><rect x="1074.3" y="30" width="1" height="5" fill="#8c8c8c"/><rect x="1107.7" y="30" width="1" height="5" fill="#8c8c8c"/><rect x="1141.0" y="21" width="1" height="14" fill="#8c8c8c"/><rect x="1174.3" y="30" width="1" height="5" fill="#8c8c8c"/><rect x="1207.7" y="30" width="1" height="5" fill="#8c8c8c"/><rect x="1241.0" y="30" width="1" height="5" fill="#8c8c8c"/><rect x="1274.3" y="30" width="1" height="5" fill="#8c8c8c"/><rect x="1307.7" y="25" width="1" height="10" fill="#8c8c8c"/><rect x="1341.0" y="30" width="1" height="5" fill="#8c8c8c"/><rect x="1374.3" y="30" width="1" height="5" fill="#8c8c8c"/><rect x="1407.7" y="30" width="1" height="5" fill="#8c8c8c"/><rect x="1441.0" y="30" width="1" height="5" fill="#8c8c8c"/><rect x="1474.3" y="21" width="1" height="14" fill="#8c8c8c"/><rect x="30" y="48.7" width="5" height="1" fill="#8c8c8c"/><rect x="20" y="82.0" width="15" height="1" fill="#8c8c8c"/><rect x="30" y="115.3" width="5" height="1" fill="#8c8c8c"/><rect x="30" y="148.7" width="5" height="1" fill="#8c8c8c"/><rect x="30" y="182.0" width="5" height="1" fill="#8c8c8c"/><rect x="30" y="215.3" width="5" height="1" fill="#8c8c8c"/><rect x="25" y="248.7" width="10" height="1" fill="#8c8c8c"/><rect x="30" y="282.0" width="5" height="1" fill="#8c8c8c"/><rect x="30" y="315.3" width="5" height="1" fill="#8c8c8c"/><rect x="30" y="348.7" width="5" height="1" fill="#8c8c8c"/><rect x="30" y="382.0" width="5" height="1" fill="#8c8c8c"/><rect x="25" y="415.3" width="10" height="1" fill="#8c8c8c"/><rect x="30" y="448.7" width="5" height="1" fill="#8c8c8c"/><rect x="30" y="482.0" width="5" height="1" fill="#8c8c8c"/><rect x="30" y="515.3" width="5" height="1" fill="#8c8c8c"/><rect x="30" y="548.7" width="5" height="1" fill="#8c8c8c"/><rect x="20" y="582.0" width="15" height="1" fill="#8c8c8c"/><rect x="30" y="615.3" width="5" height="1" fill="#8c8c8c"/><rect x="30" y="648.7" width="5" height="1" fill="#8c8c8c"/><rect x="30" y="682.0" width="5" height="1" fill="#8c8c8c"/><rect x="30" y="715.3" width="5" height="1" fill="#8c8c8c"/><rect x="25" y="748.7" width="10" height="1" fill="#8c8c8c"/><rect x="30" y="782.0" width="5" height="1" fill="#8c8c8c"/><rect x="30" y="815.3" width="5" height="1" fill="#8c8c8c"/><rect x="30" y="848.7" width="5" height="1" fill="#8c8c8c"/><rect x="30" y="882.0" width="5" height="1" fill="#8c8c8c"/><rect x="25" y="915.3" width="10" height="1" fill="#8c8c8c"/><rect x="30" y="948.7" width="5" height="1" fill="#8c8c8c"/><rect x="30" y="982.0" width="5" height="1" fill="#8c8c8c"/><rect x="30" y="1015.3" width="5" height="1" fill="#8c8c8c"/><rect x="30" y="1048.7" width="5" height="1" fill="#8c8c8c"/><rect x="20" y="1082.0" width="15" height="1" fill="#8c8c8c"/><rect x="30" y="1115.3" width="5" height="1" fill="#8c8c8c"/><rect x="30" y="1148.7" width="5" height="1" fill="#8c8c8c"/><rect x="30" y="1182.0" width="5" height="1" fill="#8c8c8c"/><rect x="30" y="1215.3" width="5" height="1" fill="#8c8c8c"/><rect x="25" y="1248.7" width="10" height="1" fill="#8c8c8c"/><rect x="30" y="1282.0" width="5" height="1" fill="#8c8c8c"/><rect x="30" y="1315.3" width="5" height="1" fill="#8c8c8c"/><rect x="30" y="1348.7" width="5" height="1" fill="#8c8c8c"/><rect x="30" y="1382.0" width="5" height="1" fill="#8c8c8c"/><rect x="25" y="1415.3" width="10" height="1" fill="#8c8c8c"/><rect x="30" y="1448.7" width="5" height="1" fill="#8c8c8c"/><rect x="34" y="35" width="1.5" height="1417" fill="#8c8c8c"/><rect x="0" y="154.8" width="34" height="1.5" fill="#222"/><rect x="0" y="368.2" width="34" height="1.5" fill="#222"/><rect x="0" y="581.5" width="34" height="1.5" fill="#222"/><rect x="0" y="794.8" width="34" height="1.5" fill="#222"/><rect x="0" y="1008.2" width="34" height="1.5" fill="#222"/><rect x="0" y="1221.5" width="34" height="1.5" fill="#222"/><rect x="0" y="1434.8" width="34" height="1.5" fill="#222"/></svg>
<div class="t " style="left:135.9px;top:5.7px;font-size:18.5px;color:#b4b4b4;">0</div>
<div class="t " style="left:458.9px;top:5.7px;font-size:18.5px;color:#b4b4b4;">500</div>
<div class="t " style="left:787.1px;top:5.7px;font-size:18.5px;color:#b4b4b4;">1000</div>
<div class="t " style="left:1120.4px;top:5.7px;font-size:18.5px;color:#b4b4b4;">1500</div>
<div class="t " style="left:1453.8px;top:5.7px;font-size:18.5px;color:#b4b4b4;">2000</div>
<div class="t " style="left:8.0px;top:217.0px;font-size:18.5px;color:#b4b4b4;">5</div>
<div class="t " style="left:8.0px;top:239.4px;font-size:18.5px;color:#b4b4b4;">0</div>
<div class="t " style="left:8.0px;top:261.8px;font-size:18.5px;color:#b4b4b4;">0</div>
<div class="t " style="left:8.0px;top:572.7px;font-size:18.5px;color:#b4b4b4;">0</div>
<div class="t " style="left:8.0px;top:883.6px;font-size:18.5px;color:#b4b4b4;">5</div>
<div class="t " style="left:8.0px;top:906.0px;font-size:18.5px;color:#b4b4b4;">0</div>
<div class="t " style="left:8.0px;top:928.4px;font-size:18.5px;color:#b4b4b4;">0</div>
<div class="t " style="left:8.0px;top:1205.8px;font-size:18.5px;color:#b4b4b4;">1</div>
<div class="t " style="left:8.0px;top:1228.2px;font-size:18.5px;color:#b4b4b4;">0</div>
<div class="t " style="left:8.0px;top:1250.6px;font-size:18.5px;color:#b4b4b4;">0</div>
<div class="t " style="left:8.0px;top:1273.0px;font-size:18.5px;color:#b4b4b4;">0</div>
<div class="t " style="left:49.0px;top:38.9px;font-size:52.0px;color:#666666;transform:scaleX(1.026);transform-origin:0 0;">ズーム</div>
<div class="t " style="left:183.0px;top:46.6px;font-size:42.5px;color:#666666;font-weight:700;transform:scaleX(0.900);transform-origin:0 0;">-4</div>
<div class="t " style="left:299.0px;top:38.9px;font-size:52.0px;color:#666666;transform:scaleX(0.910);transform-origin:0 0;">選択項目</div>
<div class="t " style="left:447.0px;top:46.6px;font-size:42.5px;color:#666666;font-weight:700;transform:scaleX(0.785);transform-origin:0 0;">:1,924.62 x 146.45</div>
<div class="t " style="left:50.0px;top:1295.9px;font-size:52.0px;color:#666666;transform:scaleX(1.012);transform-origin:0 0;">デバイスコンテンツスケール</div>
<div class="t " style="left:577.0px;top:1304.9px;font-size:39.0px;color:#666666;font-weight:700;transform:scaleX(0.941);transform-origin:0 0;">1.0</div>
<div class="t " style="left:50.0px;top:1345.9px;font-size:52.0px;color:#666666;transform:scaleX(0.993);transform-origin:0 0;">デバイスセーフゾーンセットがありません</div>
<div class="t " style="left:50.0px;top:1401.1px;font-size:43.5px;color:#666666;font-weight:700;transform:scaleX(0.905);transform-origin:0 0;">1280 x 720 (16:9)</div>
<div class="t " style="left:1096.0px;top:1401.1px;font-size:43.5px;color:#666666;font-weight:700;transform:scaleX(0.772);transform-origin:0 0;">DPI</div>
<div class="t " style="left:1166.0px;top:1395.4px;font-size:52.0px;color:#666666;transform:scaleX(0.994);transform-origin:0 0;">スケール</div>
<div class="t " style="left:1336.0px;top:1401.1px;font-size:43.5px;color:#666666;font-weight:700;transform:scaleX(0.909);transform-origin:0 0;">0.67</div>
<svg class="a" style="left:1433px;top:1411px;" width="32" height="32" viewBox="0 0 32 32"><circle cx="16" cy="16" r="10" fill="none" stroke="#93a5dc" stroke-width="6"/><rect x="13" y="0" width="6" height="8" fill="#93a5dc" transform="rotate(0 16 16)"/><rect x="13" y="0" width="6" height="8" fill="#93a5dc" transform="rotate(45 16 16)"/><rect x="13" y="0" width="6" height="8" fill="#93a5dc" transform="rotate(90 16 16)"/><rect x="13" y="0" width="6" height="8" fill="#93a5dc" transform="rotate(135 16 16)"/><rect x="13" y="0" width="6" height="8" fill="#93a5dc" transform="rotate(180 16 16)"/><rect x="13" y="0" width="6" height="8" fill="#93a5dc" transform="rotate(225 16 16)"/><rect x="13" y="0" width="6" height="8" fill="#93a5dc" transform="rotate(270 16 16)"/><rect x="13" y="0" width="6" height="8" fill="#93a5dc" transform="rotate(315 16 16)"/></svg>
<div class="a" style="left:736px;top:38px;width:116px;height:48px;background:#333333;border:2px solid #1c1c1c;border-radius:24px"></div>
<div class="a" style="left:785px;top:40px;width:2px;height:44px;background:#1c1c1c;"></div>
<svg class="a" style="left:748px;top:46px;" width="32" height="32" viewBox="0 0 32 32"><circle cx="16" cy="16" r="15" fill="#8c8c8c"/><path d="M6 8 q6-4 8 2 q-2 6 4 8 q2 6-2 10 q-10-2-12-10z M20 4 q6 2 8 8 q-4 2-6-2z" fill="#c8c8c8"/></svg>
<div class="t " style="left:796.0px;top:46.4px;font-size:31.0px;color:#d0d0d0;transform:scaleX(1.011);transform-origin:0 0;">なし</div>
<div class="a" style="left:864px;top:38px;width:100px;height:48px;background:#2c60be;border:2px solid #1c1c1c;border-radius:24px"></div>
<div class="a" style="left:913px;top:40px;width:2px;height:44px;background:#1c1c1c;"></div>
<div class="a" style="left:876px;top:46px;width:32px;height:32px;background:transparent;border:2px dashed #8a8a9a;border-radius:3px"></div>
<svg class="a" style="left:926px;top:47px;" width="22" height="28" viewBox="0 0 22 28"><rect x="0" y="12" width="22" height="16" rx="2" fill="#f2f2f2"/><path d="M4.5 12 v-4 a6.5 6.5 0 0 1 13 0 v4" fill="none" stroke="#f2f2f2" stroke-width="3.2"/><rect x="9.5" y="17" width="3" height="6" fill="#2c60be"/></svg>
<div class="a" style="left:976px;top:38px;width:100px;height:48px;background:#333333;border:2px solid #1c1c1c;border-radius:24px;overflow:hidden"></div>
<div class="a" style="left:978px;top:40px;width:48px;height:44px;background:#2c60be;border-radius:22px 0 0 22px"></div>
<svg class="a" style="left:989px;top:49px;" width="30" height="26" viewBox="0 0 30 26"><rect x="0" y="0" width="7" height="26" rx="2" fill="#dedede"/><rect x="11" y="3" width="19" height="22" rx="2" fill="#dedede"/></svg>
<div class="t " style="left:1040.0px;top:49.9px;font-size:26.0px;color:#b8b8b8;font-weight:700;transform:scaleX(0.959);transform-origin:0 0;">R</div>
<div class="a" style="left:1088px;top:38px;width:80px;height:48px;background:#333333;border:2px solid #1c1c1c;border-radius:24px;overflow:hidden"></div>
<div class="a" style="left:1090px;top:40px;width:48px;height:44px;background:#2c60be;border-radius:22px 0 0 22px"></div>
<svg class="a" style="left:1102px;top:50px;" width="26" height="26" viewBox="0 0 26 26"><rect x="1" y="1" width="24" height="24" rx="3" fill="none" stroke="#f2f2f2" stroke-width="2.5"/><path d="M9 1v24M17 1v24M1 9h24M1 17h24" stroke="#f2f2f2" stroke-width="2.5"/></svg>
<div class="t " style="left:1147.0px;top:50.9px;font-size:24.0px;color:#c8c8c8;transform:scaleX(1.049);transform-origin:0 0;">4</div>
<div class="a" style="left:1170px;top:39px;width:44px;height:46px;background:#333333;border:2px solid #1c1c1c;border-radius:50%"></div>
<div class="a" style="left:1216px;top:39px;width:44px;height:46px;background:#333333;border:2px solid #1c1c1c;border-radius:50%"></div>
<div class="a" style="left:1262px;top:39px;width:44px;height:46px;background:#333333;border:2px solid #1c1c1c;border-radius:50%"></div>
<svg class="a" style="left:1180px;top:50px;" width="26" height="24" viewBox="0 0 26 24"><path d="M1 6 v-5 h6 M19 1 h6 v5 M25 18 v5 h-6 M7 23 h-6 v-5" fill="none" stroke="#9a9a9a" stroke-width="1.5"/><path d="M9 6 l10 9 h-5 l3 6 l-3 1 l-3-6 l-2 4z" fill="#b8b8b8"/></svg>
<svg class="a" style="left:1223px;top:50px;" width="32" height="22" viewBox="0 0 32 22"><rect x="1" y="1" width="30" height="20" fill="none" stroke="#9a9a9a" stroke-width="1.2"/><circle cx="6" cy="6" r="2.5" fill="#9a9a9a"/><path d="M1 21 L11 10 L17 15 L22 8 L31 21z" fill="#8a8a8a"/></svg>
<svg class="a" style="left:1269px;top:48px;" width="32" height="26" viewBox="0 0 32 26"><path d="M2 25 L14 2 V25z" fill="none" stroke="#8a8a8a" stroke-width="1.2"/><path d="M18 2 L30 25 H18z" fill="#8a8a8a"/><path d="M16 0 V26" stroke="#6a6a6a" stroke-width="1" stroke-dasharray="2 2"/></svg>
<div class="a" style="left:1311px;top:37px;width:200px;height:54px;background:#333333;border:2px solid #1c1c1c;border-radius:27px"></div>
<div class="t " style="left:1320.0px;top:46.9px;font-size:34.0px;color:#d0d0d0;transform:scaleX(0.973);transform-origin:0 0;">画面サイズ</div>
<svg class="a" style="left:1457px;top:59px;" width="20" height="12" viewBox="0 0 20 12"><path d="M2 2 l8 8 l8-8" fill="none" stroke="#c6c6c6" stroke-width="3"/></svg>
<div class="a" style="left:136px;top:679px;width:1278px;height:493px;background:#000;"></div>
<div class="a" style="left:140px;top:581px;width:1280px;height:95px;background:#ffffff;"></div>
<div class="a" style="left:172px;top:679px;width:332px;height:449px;background:transparent;border-left:1px dashed #8a8a8a;border-right:1px dashed #8a8a8a;border-bottom:1px dashed #8a8a8a"></div>
<div class="a" style="left:172px;top:1129px;width:332px;height:60px;background:transparent;border:1px dashed #8a8a8a"></div>
<svg class="a" style="left:272px;top:685px;" width="134" height="178" viewBox="0 0 134 178"><rect x="0" y="0" width="134" height="172" fill="#a6a63c"/><path d="M0 22 L42 0 H62 L0 48z" fill="#b4b444"/><path d="M78 0 L134 34 V12 L102 0z" fill="#bcbc4a"/><path d="M0 118 L32 172 H12 L0 150z" fill="#b6b646"/><path d="M88 172 L134 128 V150 L110 172z" fill="#c0c04c"/><path d="M134 58 L114 98 L134 122z" fill="#b0b042"/><path d="M18 172 L62 148 L72 172z" fill="#b2b243"/><path d="M0 70 L12 90 L0 100z" fill="#b8b848"/><path d="M30 0 L50 8 L70 0z" fill="#c4c450"/><rect x="14.5" y="11.5" width="107" height="144" fill="#383838" stroke="#d8d852" stroke-width="3"/><rect x="0" y="172" width="134" height="7" fill="#fff"/><rect x="62" y="174" width="10" height="2" fill="#777"/></svg>
<svg class="a" style="left:272px;top:1151px;" width="134" height="21" viewBox="0 0 134 21"><rect x="0" y="0" width="134" height="172" fill="#a6a63c"/><path d="M0 22 L42 0 H62 L0 48z" fill="#b4b444"/><path d="M78 0 L134 34 V12 L102 0z" fill="#bcbc4a"/><path d="M0 118 L32 172 H12 L0 150z" fill="#b6b646"/><path d="M88 172 L134 128 V150 L110 172z" fill="#c0c04c"/><path d="M134 58 L114 98 L134 122z" fill="#b0b042"/><path d="M18 172 L62 148 L72 172z" fill="#b2b243"/><path d="M0 70 L12 90 L0 100z" fill="#b8b848"/><path d="M30 0 L50 8 L70 0z" fill="#c4c450"/><rect x="14.5" y="11.5" width="107" height="144" fill="#383838" stroke="#d8d852" stroke-width="3"/><rect x="0" y="172" width="134" height="7" fill="#fff"/><rect x="62" y="174" width="10" height="2" fill="#777"/></svg>
<svg class="a" style="left:316px;top:745px;" width="46" height="42" viewBox="0 0 46 42"><path d="M23 2 L44 39 L2 39z" fill="#f6ee4e"/><circle cx="23" cy="25" r="16.5" fill="#f6ee4e"/><circle cx="23" cy="25" r="8.7" fill="#383838"/></svg>
<div class="a" style="left:172px;top:886px;width:332px;height:41px;background:#ffffff;"></div>
<div class="t " style="left:327.0px;top:899.5px;font-size:13.0px;color:#111;font-weight:700;transform:scaleX(1.014);transform-origin:0 0;">100</div>
<div class="a" style="left:585px;top:679px;width:332px;height:449px;background:transparent;border-left:1px dashed #8a8a8a;border-right:1px dashed #8a8a8a;border-bottom:1px dashed #8a8a8a"></div>
<div class="a" style="left:585px;top:1129px;width:332px;height:60px;background:transparent;border:1px dashed #8a8a8a"></div>
<svg class="a" style="left:685px;top:685px;" width="134" height="178" viewBox="0 0 134 178"><rect x="0" y="0" width="134" height="172" fill="#a6a63c"/><path d="M0 22 L42 0 H62 L0 48z" fill="#b4b444"/><path d="M78 0 L134 34 V12 L102 0z" fill="#bcbc4a"/><path d="M0 118 L32 172 H12 L0 150z" fill="#b6b646"/><path d="M88 172 L134 128 V150 L110 172z" fill="#c0c04c"/><path d="M134 58 L114 98 L134 122z" fill="#b0b042"/><path d="M18 172 L62 148 L72 172z" fill="#b2b243"/><path d="M0 70 L12 90 L0 100z" fill="#b8b848"/><path d="M30 0 L50 8 L70 0z" fill="#c4c450"/><rect x="14.5" y="11.5" width="107" height="144" fill="#383838" stroke="#d8d852" stroke-width="3"/><rect x="0" y="172" width="134" height="7" fill="#fff"/><rect x="62" y="174" width="10" height="2" fill="#777"/></svg>
<svg class="a" style="left:685px;top:1151px;" width="134" height="21" viewBox="0 0 134 21"><rect x="0" y="0" width="134" height="172" fill="#a6a63c"/><path d="M0 22 L42 0 H62 L0 48z" fill="#b4b444"/><path d="M78 0 L134 34 V12 L102 0z" fill="#bcbc4a"/><path d="M0 118 L32 172 H12 L0 150z" fill="#b6b646"/><path d="M88 172 L134 128 V150 L110 172z" fill="#c0c04c"/><path d="M134 58 L114 98 L134 122z" fill="#b0b042"/><path d="M18 172 L62 148 L72 172z" fill="#b2b243"/><path d="M0 70 L12 90 L0 100z" fill="#b8b848"/><path d="M30 0 L50 8 L70 0z" fill="#c4c450"/><rect x="14.5" y="11.5" width="107" height="144" fill="#383838" stroke="#d8d852" stroke-width="3"/><rect x="0" y="172" width="134" height="7" fill="#fff"/><rect x="62" y="174" width="10" height="2" fill="#777"/></svg>
<svg class="a" style="left:729px;top:745px;" width="46" height="42" viewBox="0 0 46 42"><path d="M23 2 L44 39 L2 39z" fill="#f6ee4e"/><circle cx="23" cy="25" r="16.5" fill="#f6ee4e"/><circle cx="23" cy="25" r="8.7" fill="#383838"/></svg>
<div class="a" style="left:585px;top:886px;width:332px;height:41px;background:#ffffff;"></div>
<div class="t " style="left:740.0px;top:899.5px;font-size:13.0px;color:#111;font-weight:700;transform:scaleX(1.014);transform-origin:0 0;">100</div>
<div class="a" style="left:998px;top:679px;width:332px;height:449px;background:transparent;border-left:1px dashed #8a8a8a;border-right:1px dashed #8a8a8a;border-bottom:1px dashed #8a8a8a"></div>
<div class="a" style="left:998px;top:1129px;width:332px;height:60px;background:transparent;border:1px dashed #8a8a8a"></div>
<svg class="a" style="left:1098px;top:685px;" width="134" height="178" viewBox="0 0 134 178"><rect x="0" y="0" width="134" height="172" fill="#a6a63c"/><path d="M0 22 L42 0 H62 L0 48z" fill="#b4b444"/><path d="M78 0 L134 34 V12 L102 0z" fill="#bcbc4a"/><path d="M0 118 L32 172 H12 L0 150z" fill="#b6b646"/><path d="M88 172 L134 128 V150 L110 172z" fill="#c0c04c"/><path d="M134 58 L114 98 L134 122z" fill="#b0b042"/><path d="M18 172 L62 148 L72 172z" fill="#b2b243"/><path d="M0 70 L12 90 L0 100z" fill="#b8b848"/><path d="M30 0 L50 8 L70 0z" fill="#c4c450"/><rect x="14.5" y="11.5" width="107" height="144" fill="#383838" stroke="#d8d852" stroke-width="3"/><rect x="0" y="172" width="134" height="7" fill="#fff"/><rect x="62" y="174" width="10" height="2" fill="#777"/></svg>
<svg class="a" style="left:1098px;top:1151px;" width="134" height="21" viewBox="0 0 134 21"><rect x="0" y="0" width="134" height="172" fill="#a6a63c"/><path d="M0 22 L42 0 H62 L0 48z" fill="#b4b444"/><path d="M78 0 L134 34 V12 L102 0z" fill="#bcbc4a"/><path d="M0 118 L32 172 H12 L0 150z" fill="#b6b646"/><path d="M88 172 L134 128 V150 L110 172z" fill="#c0c04c"/><path d="M134 58 L114 98 L134 122z" fill="#b0b042"/><path d="M18 172 L62 148 L72 172z" fill="#b2b243"/><path d="M0 70 L12 90 L0 100z" fill="#b8b848"/><path d="M30 0 L50 8 L70 0z" fill="#c4c450"/><rect x="14.5" y="11.5" width="107" height="144" fill="#383838" stroke="#d8d852" stroke-width="3"/><rect x="0" y="172" width="134" height="7" fill="#fff"/><rect x="62" y="174" width="10" height="2" fill="#777"/></svg>
<svg class="a" style="left:1142px;top:745px;" width="46" height="42" viewBox="0 0 46 42"><path d="M23 2 L44 39 L2 39z" fill="#f6ee4e"/><circle cx="23" cy="25" r="16.5" fill="#f6ee4e"/><circle cx="23" cy="25" r="8.7" fill="#383838"/></svg>
<div class="a" style="left:998px;top:886px;width:332px;height:41px;background:#ffffff;"></div>
<div class="t " style="left:1153.0px;top:899.5px;font-size:13.0px;color:#111;font-weight:700;transform:scaleX(1.014);transform-origin:0 0;">100</div>
<div class="a" style="left:1373px;top:679px;width:41px;height:84px;background:#ffffff;"></div>
<div class="a" style="left:1394px;top:763px;width:1px;height:409px;background:#1a1a1a;"></div>
<div class="a" style="left:134px;top:663px;width:1px;height:509px;background:transparent;border-left:1px dashed #9a9a9a"></div>
<div class="a" style="left:140px;top:679px;width:1px;height:493px;background:transparent;border-left:1px dashed #6a6a6a"></div>
<div class="a" style="left:1418px;top:679px;width:1px;height:622px;background:transparent;border-left:1px dashed #9a9a9a"></div>
<div class="a" style="left:247px;top:581px;width:1px;height:95px;background:transparent;border-left:1px dashed #8a8a8a"></div>
<svg class="a" style="left:160px;top:594px;" width="66" height="66" viewBox="0 0 66 66"><path d="M33 2 L64 56 L2 56z" fill="#f0e250"/><circle cx="33" cy="37.6" r="25.7" fill="#f0e250"/><circle cx="33" cy="37.6" r="15.4" fill="#fff"/></svg>
<div class="t " style="left:258.0px;top:620.4px;font-size:23.0px;color:#111;font-weight:700;transform:scaleX(0.862);transform-origin:0 0;">@syui.ai</div>
<div class="a" style="left:140px;top:570px;width:1280px;height:1px;background:transparent;border-top:2px dashed #bdbdbd"></div>
<div class="a" style="left:137px;top:576px;width:1285px;height:104px;background:transparent;border:3px solid #5fe047"></div>
<div class="a" style="left:140px;top:581px;width:1280px;height:95px;background:transparent;border:1px dashed #777"></div>
<div class="a" style="left:138px;top:1172px;width:1290px;height:129px;background:#ffffff;"></div>
<div class="a" style="left:568px;top:1172px;width:1px;height:129px;background:#cfcfcf;"></div>
<div class="a" style="left:998px;top:1172px;width:1px;height:129px;background:#cfcfcf;"></div>
<div class="a" style="left:138px;top:1300px;width:1290px;height:1px;background:transparent;border-top:1px dashed #888"></div>
<div class="a" style="left:1427px;top:1172px;width:1px;height:129px;background:transparent;border-left:1px dashed #999"></div>
<div class="a" style="left:1427px;top:596px;width:1px;height:576px;background:transparent;border-left:1px dashed #bbb"></div>
<div class="a" style="left:1415px;top:679px;width:1px;height:493px;background:transparent;border-left:1px dashed #ccc"></div>
<svg class="a" style="left:331px;top:1216px;" width="44" height="44" viewBox="0 0 44 44"><circle cx="13" cy="13" r="9.5" fill="#000"/><rect x="10.15" y="-0.7750000000000004" width="5.7" height="7.6000000000000005" fill="#000" transform="rotate(0 13 13)"/><rect x="10.15" y="-0.7750000000000004" width="5.7" height="7.6000000000000005" fill="#000" transform="rotate(45 13 13)"/><rect x="10.15" y="-0.7750000000000004" width="5.7" height="7.6000000000000005" fill="#000" transform="rotate(90 13 13)"/><rect x="10.15" y="-0.7750000000000004" width="5.7" height="7.6000000000000005" fill="#000" transform="rotate(135 13 13)"/><rect x="10.15" y="-0.7750000000000004" width="5.7" height="7.6000000000000005" fill="#000" transform="rotate(180 13 13)"/><rect x="10.15" y="-0.7750000000000004" width="5.7" height="7.6000000000000005" fill="#000" transform="rotate(225 13 13)"/><rect x="10.15" y="-0.7750000000000004" width="5.7" height="7.6000000000000005" fill="#000" transform="rotate(270 13 13)"/><rect x="10.15" y="-0.7750000000000004" width="5.7" height="7.6000000000000005" fill="#000" transform="rotate(315 13 13)"/><circle cx="13" cy="13" r="3.61" fill="#fff"/><circle cx="32" cy="32" r="7" fill="#000"/><rect x="29.9" y="21.85" width="4.2" height="5.6000000000000005" fill="#000" transform="rotate(0 32 32)"/><rect x="29.9" y="21.85" width="4.2" height="5.6000000000000005" fill="#000" transform="rotate(45 32 32)"/><rect x="29.9" y="21.85" width="4.2" height="5.6000000000000005" fill="#000" transform="rotate(90 32 32)"/><rect x="29.9" y="21.85" width="4.2" height="5.6000000000000005" fill="#000" transform="rotate(135 32 32)"/><rect x="29.9" y="21.85" width="4.2" height="5.6000000000000005" fill="#000" transform="rotate(180 32 32)"/><rect x="29.9" y="21.85" width="4.2" height="5.6000000000000005" fill="#000" transform="rotate(225 32 32)"/><rect x="29.9" y="21.85" width="4.2" height="5.6000000000000005" fill="#000" transform="rotate(270 32 32)"/><rect x="29.9" y="21.85" width="4.2" height="5.6000000000000005" fill="#000" transform="rotate(315 32 32)"/><circle cx="32" cy="32" r="2.66" fill="#fff"/></svg>
<svg class="a" style="left:763px;top:1216px;" width="40" height="42" viewBox="0 0 40 42"><path d="M11 9 A15 15 0 1 0 29 9" fill="none" stroke="#000" stroke-width="4"/><path d="M20 2 V20" stroke="#000" stroke-width="4"/></svg>
<svg class="a" style="left:1195px;top:1220px;" width="36" height="32" viewBox="0 0 36 32"><path d="M18 1 L35 31 H1z" fill="#000" stroke="#000" stroke-width="2" stroke-linejoin="round"/><rect x="16" y="10" width="4" height="11" fill="#fff"/><rect x="16" y="23" width="4" height="4" fill="#fff"/></svg>
<svg class="a" style="left:76px;top:535px;" width="64" height="96" viewBox="0 0 64 96"><g fill="#fff" stroke="#000" stroke-width="2.2" stroke-linejoin="miter"><path d="M16.4 0.5 H38.6 L59 38 L52 45 L16.8 18.5z"/><path d="M0.7 33 L54 44 L54 51 L0.7 62z"/><path d="M16.4 94.5 H38.6 L59 57 L52 50 L16.8 76.5z"/><circle cx="61" cy="47.5" r="8" stroke="none"/></g></svg>
<svg class="a" style="left:1420px;top:535px;transform:scaleX(-1)" width="64" height="96" viewBox="0 0 64 96"><g fill="#fff" stroke="#000" stroke-width="2.2" stroke-linejoin="miter"><path d="M16.4 0.5 H38.6 L59 38 L52 45 L16.8 18.5z"/><path d="M0.7 33 L54 44 L54 51 L0.7 62z"/><path d="M16.4 94.5 H38.6 L59 57 L52 50 L16.8 76.5z"/><circle cx="61" cy="47.5" r="8" stroke="none"/></g></svg>
<div class="a" style="left:119.7px;top:618.6px;width:14px;height:14px;background:#f4f4f4;border-radius:50%;box-shadow:0 0 2px #666"></div>
<div class="a" style="left:119.7px;top:678px;width:14px;height:14px;background:#f4f4f4;border-radius:50%;box-shadow:0 0 2px #666"></div>
<div class="a" style="left:769px;top:560px;width:14px;height:14px;background:#f4f4f4;border-radius:50%;box-shadow:0 0 2px #666"></div>
<div class="a" style="left:769px;top:678px;width:14px;height:14px;background:#f4f4f4;border-radius:50%;box-shadow:0 0 2px #666"></div>
<div class="a" style="left:1420px;top:618.6px;width:14px;height:14px;background:#f4f4f4;border-radius:50%;box-shadow:0 0 2px #666"></div>
<div class="a" style="left:1420px;top:678px;width:14px;height:14px;background:#f4f4f4;border-radius:50%;box-shadow:0 0 2px #666"></div>
<svg class="a" style="left:1423px;top:1306px;" width="38" height="38" viewBox="0 0 38 38"><path d="M3 3 L35 35" stroke="#eee" stroke-width="4.5"/><path d="M1 1 H14 L1 14z M37 37 H24 L37 24z" fill="#eee"/></svg>
</div>
<div class="a" style="left:2344px;top:214px;width:319px;height:51px;background:#262626;border-radius:8px 8px 0 0"></div>
<svg class="a" style="left:2354px;top:222px;" width="34" height="32" viewBox="0 0 34 32"><path d="M2 2 h14 M2 8 h8 M14 24 h18 M20 30 h12" stroke="#9a9a9a" stroke-width="1.6"/><path d="M2 30 L7 19 L24 3 L29 8 L12 25z" fill="#c8c8c8"/></svg>
<div class="t " style="left:2399.0px;top:219.9px;font-size:34.0px;color:#d8d8d8;transform:scaleX(1.020);transform-origin:0 0;">詳細</div>
<svg class="a" style="left:2620px;top:230px;" width="14" height="14" viewBox="0 0 14 14"><path d="M2 2L12 12M12 2L2 12" stroke="#d8d8d8" stroke-width="2.6"/></svg>
<div class="a" style="left:2344px;top:264px;width:528px;height:1402px;background:#242424;"></div>
<svg class="a" style="left:2357px;top:291px;" width="29" height="29" viewBox="0 0 29 29"><rect x="1" y="1" width="6" height="6" fill="none" stroke="#c8c8c8" stroke-width="2"/><rect x="12" y="1" width="15" height="14" fill="none" stroke="#c8c8c8" stroke-width="2"/><rect x="1" y="11" width="6" height="16" fill="none" stroke="#c8c8c8" stroke-width="2"/><rect x="12" y="20" width="6" height="7" fill="none" stroke="#c8c8c8" stroke-width="2"/><rect x="21" y="20" width="6" height="7" fill="none" stroke="#c8c8c8" stroke-width="2"/></svg>
<div class="a" style="left:2395px;top:283px;width:397px;height:43px;background:#151515;border:2px solid #2c2c2c;border-radius:7px"></div>
<div class="t " style="left:2412.0px;top:288.7px;font-size:30.5px;color:#d0d0d0;transform:scaleX(0.850);transform-origin:0 0;">GridPanel_310</div>
<div class="a" style="left:2807px;top:289px;width:33px;height:33px;background:#151515;border:2px solid #2c2c2c;border-radius:5px"></div>
<div class="t " style="left:2849.0px;top:288.9px;font-size:30.0px;color:#d0d0d0;transform:scaleX(0.943);transform-origin:0 0;">Is</div>
<div class="a" style="left:2365px;top:338px;width:344px;height:40px;background:#383838;border:2px solid #1e1e1e;border-radius:7px"></div>
<svg class="a" style="left:2394px;top:345px;" width="28" height="28" viewBox="0 0 28 28"><path d="M14 1 V27 M1 14 H27" stroke="#8cc65a" stroke-width="4.5"/></svg>
<div class="t " style="left:2432.0px;top:341.4px;font-size:33.0px;color:#d8d8d8;transform:scaleX(1.010);transform-origin:0 0;">コンポーネントを追加</div>
<div class="a" style="left:2364px;top:388px;width:488px;height:119px;background:#1f1f1f;"></div>
<div class="a" style="left:2362px;top:542px;width:396px;height:42px;background:#151515;border:2px solid #2c2c2c;border-radius:21px"></div>
<svg class="a" style="left:2373px;top:551px;" width="25" height="25" viewBox="0 0 25 25"><circle cx="10.5" cy="10.5" r="8" fill="none" stroke="#d0d0d0" stroke-width="2.3"/><path d="M16.5 16.5 l7 7" stroke="#d0d0d0" stroke-width="2.5"/></svg>
<div class="t " style="left:2415.0px;top:545.9px;font-size:34.0px;color:#6a6a6a;transform:scaleX(1.020);transform-origin:0 0;">検索</div>
<svg class="a" style="left:2786px;top:549px;" width="28" height="28" viewBox="0 0 28 28"><rect x="1.5" y="1.5" width="25" height="25" rx="2" fill="none" stroke="#c8c8c8" stroke-width="3"/><path d="M1.5 9 H26.5 M1.5 16 H26.5 M14 9 V26.5" stroke="#c8c8c8" stroke-width="3"/></svg>
<svg class="a" style="left:2833px;top:547px;" width="30" height="30" viewBox="0 0 30 30"><circle cx="15" cy="15" r="9" fill="none" stroke="#c8c8c8" stroke-width="5"/><rect x="12.5" y="0" width="5" height="7" fill="#c8c8c8" transform="rotate(0 15 15)"/><rect x="12.5" y="0" width="5" height="7" fill="#c8c8c8" transform="rotate(45 15 15)"/><rect x="12.5" y="0" width="5" height="7" fill="#c8c8c8" transform="rotate(90 15 15)"/><rect x="12.5" y="0" width="5" height="7" fill="#c8c8c8" transform="rotate(135 15 15)"/><rect x="12.5" y="0" width="5" height="7" fill="#c8c8c8" transform="rotate(180 15 15)"/><rect x="12.5" y="0" width="5" height="7" fill="#c8c8c8" transform="rotate(225 15 15)"/><rect x="12.5" y="0" width="5" height="7" fill="#c8c8c8" transform="rotate(270 15 15)"/><rect x="12.5" y="0" width="5" height="7" fill="#c8c8c8" transform="rotate(315 15 15)"/></svg>
<div class="a" style="left:2344px;top:600px;width:528px;height:1063px;background:#1c1c1c;"></div>
<div class="a" style="left:2849px;top:606px;width:14px;height:449px;background:#4a4a4a;border-radius:7px"></div>
<div class="a" style="left:2344px;top:602px;width:496px;height:52px;background:#2f2f2f;"></div>
<svg class="a" style="left:2354px;top:623.0px;" width="20" height="11" viewBox="0 0 20 11"><path d="M0 0 L20 0 L10 11z" fill="#8a8a8a"/></svg>
<div class="t " style="left:2389.0px;top:616.4px;font-size:25.0px;color:#d0d0d0;font-weight:700;transform:scaleX(1.023);transform-origin:0 0;"><span style="-webkit-text-stroke:0.56px #d0d0d0">スロット</span> (<span style="-webkit-text-stroke:0.56px #d0d0d0">キャンバスパネルスロット</span>)</div>
<div class="a" style="left:2344px;top:656px;width:196px;height:52px;background:#282828;"></div>
<div class="a" style="left:2542px;top:656px;width:208px;height:52px;background:#282828;"></div>
<div class="a" style="left:2752px;top:656px;width:88px;height:52px;background:#282828;"></div>
<svg class="a" style="left:2358px;top:672px;" width="12" height="20" viewBox="0 0 12 20"><path d="M0 0 L12 10 L0 20z" fill="#8a8a8a"/></svg>
<div class="t " style="left:2389.0px;top:666.9px;font-size:30.0px;color:#c0c0c0;transform:scaleX(0.844);transform-origin:0 0;">アンカー</div>
<div class="a" style="left:2567px;top:662px;width:177px;height:40px;background:#141414;border:2px solid #333;border-radius:7px"></div>
<div class="t " style="left:2583.0px;top:664.9px;font-size:34.0px;color:#d0d0d0;transform:scaleX(0.951);transform-origin:0 0;">アンカー</div>
<svg class="a" style="left:2699px;top:677px;" width="20" height="12" viewBox="0 0 20 12"><path d="M2 2 l8 8 l8-8" fill="none" stroke="#c6c6c6" stroke-width="3"/></svg>
<svg class="a" style="left:2808px;top:670px;" width="24" height="24" viewBox="0 0 24 24"><path d="M9 2 L2 8 L9 14 M2 8 H14 a7.5 7.5 0 0 1 0 15 H12" fill="none" stroke="#c8c8c8" stroke-width="2.6"/></svg>
<div class="a" style="left:2344px;top:710px;width:196px;height:52px;background:#282828;"></div>
<div class="a" style="left:2542px;top:710px;width:208px;height:52px;background:#282828;"></div>
<div class="a" style="left:2752px;top:710px;width:88px;height:52px;background:#282828;"></div>
<div class="t " style="left:2389.0px;top:720.9px;font-size:30.0px;color:#c0c0c0;transform:scaleX(0.800);transform-origin:0 0;">左オフセット</div>
<div class="a" style="left:2567px;top:717.0px;width:177px;height:38px;background:#141414;border:2px solid #333;border-radius:7px"></div>
<div class="t " style="left:2584.0px;top:723.9px;font-size:24.0px;color:#e0e0e0;transform:scaleX(0.930);transform-origin:0 0;">-2.810811</div>
<svg class="a" style="left:2768px;top:724px;" width="24" height="24" viewBox="0 0 24 24"><path d="M9 2 L2 8 L9 14 M2 8 H14 a7.5 7.5 0 0 1 0 15 H12" fill="none" stroke="#c8c8c8" stroke-width="2.6"/></svg>
<svg class="a" style="left:2808px;top:724px;" width="24" height="24" viewBox="0 0 24 24"><path d="M12 1 L23 12 L12 23 L1 12z" fill="none" stroke="#3a3a3a" stroke-width="2"/></svg>
<div class="a" style="left:2344px;top:764px;width:196px;height:52px;background:#282828;"></div>
<div class="a" style="left:2542px;top:764px;width:208px;height:52px;background:#282828;"></div>
<div class="a" style="left:2752px;top:764px;width:88px;height:52px;background:#282828;"></div>
<div class="t " style="left:2389.0px;top:774.9px;font-size:30.0px;color:#c0c0c0;transform:scaleX(0.927);transform-origin:0 0;">位置 Y</div>
<div class="a" style="left:2567px;top:771.0px;width:177px;height:38px;background:#141414;border:2px solid #333;border-radius:7px"></div>
<div class="t " style="left:2584.0px;top:777.9px;font-size:24.0px;color:#e0e0e0;transform:scaleX(0.930);transform-origin:0 0;">-4.0</div>
<svg class="a" style="left:2768px;top:778px;" width="24" height="24" viewBox="0 0 24 24"><path d="M9 2 L2 8 L9 14 M2 8 H14 a7.5 7.5 0 0 1 0 15 H12" fill="none" stroke="#c8c8c8" stroke-width="2.6"/></svg>
<svg class="a" style="left:2808px;top:778px;" width="24" height="24" viewBox="0 0 24 24"><path d="M12 1 L23 12 L12 23 L1 12z" fill="none" stroke="#3a3a3a" stroke-width="2"/></svg>
<div class="a" style="left:2344px;top:818px;width:196px;height:52px;background:#282828;"></div>
<div class="a" style="left:2542px;top:818px;width:208px;height:52px;background:#282828;"></div>
<div class="a" style="left:2752px;top:818px;width:88px;height:52px;background:#282828;"></div>
<div class="t " style="left:2389.0px;top:828.9px;font-size:30.0px;color:#c0c0c0;transform:scaleX(0.800);transform-origin:0 0;">右オフセット</div>
<div class="a" style="left:2567px;top:825.0px;width:177px;height:38px;background:#141414;border:2px solid #333;border-radius:7px"></div>
<div class="t " style="left:2584.0px;top:831.9px;font-size:24.0px;color:#e0e0e0;transform:scaleX(0.930);transform-origin:0 0;">0.107985</div>
<svg class="a" style="left:2768px;top:832px;" width="24" height="24" viewBox="0 0 24 24"><path d="M9 2 L2 8 L9 14 M2 8 H14 a7.5 7.5 0 0 1 0 15 H12" fill="none" stroke="#c8c8c8" stroke-width="2.6"/></svg>
<svg class="a" style="left:2808px;top:832px;" width="24" height="24" viewBox="0 0 24 24"><path d="M12 1 L23 12 L12 23 L1 12z" fill="none" stroke="#3a3a3a" stroke-width="2"/></svg>
<div class="a" style="left:2344px;top:872px;width:196px;height:52px;background:#282828;"></div>
<div class="a" style="left:2542px;top:872px;width:208px;height:52px;background:#282828;"></div>
<div class="a" style="left:2752px;top:872px;width:88px;height:52px;background:#282828;"></div>
<div class="t " style="left:2389.0px;top:882.9px;font-size:30.0px;color:#c0c0c0;transform:scaleX(0.803);transform-origin:0 0;">サイズ Y</div>
<div class="a" style="left:2567px;top:879.0px;width:177px;height:38px;background:#141414;border:2px solid #333;border-radius:7px"></div>
<div class="t " style="left:2584.0px;top:885.9px;font-size:24.0px;color:#e0e0e0;transform:scaleX(0.930);transform-origin:0 0;">146.449829</div>
<svg class="a" style="left:2768px;top:886px;" width="24" height="24" viewBox="0 0 24 24"><path d="M9 2 L2 8 L9 14 M2 8 H14 a7.5 7.5 0 0 1 0 15 H12" fill="none" stroke="#c8c8c8" stroke-width="2.6"/></svg>
<svg class="a" style="left:2808px;top:886px;" width="24" height="24" viewBox="0 0 24 24"><path d="M12 1 L23 12 L12 23 L1 12z" fill="none" stroke="#3a3a3a" stroke-width="2"/></svg>
<div class="a" style="left:2344px;top:926px;width:196px;height:52px;background:#282828;"></div>
<div class="a" style="left:2542px;top:926px;width:208px;height:52px;background:#282828;"></div>
<div class="a" style="left:2752px;top:926px;width:88px;height:52px;background:#282828;"></div>
<svg class="a" style="left:2358px;top:942px;" width="12" height="20" viewBox="0 0 12 20"><path d="M0 0 L12 10 L0 20z" fill="#8a8a8a"/></svg>
<div class="t " style="left:2389.0px;top:937.9px;font-size:28.0px;color:#c0c0c0;transform:scaleX(0.747);transform-origin:0 0;">Alignment</div>
<div class="a" style="left:2567px;top:933.0px;width:84px;height:38px;background:#141414;border:2px solid #333;border-radius:7px"></div>
<div class="t " style="left:2584.0px;top:939.9px;font-size:24.0px;color:#e0e0e0;transform:scaleX(0.930);transform-origin:0 0;">0.0</div>
<div class="a" style="left:2660px;top:933.0px;width:84px;height:38px;background:#141414;border:2px solid #333;border-radius:7px"></div>
<div class="t " style="left:2677.0px;top:939.9px;font-size:24.0px;color:#e0e0e0;transform:scaleX(0.930);transform-origin:0 0;">0.0</div>
<svg class="a" style="left:2808px;top:940px;" width="24" height="24" viewBox="0 0 24 24"><path d="M12 1 L23 12 L12 23 L1 12z" fill="none" stroke="#3a3a3a" stroke-width="2"/></svg>
<div class="a" style="left:2344px;top:980px;width:196px;height:52px;background:#282828;"></div>
<div class="a" style="left:2542px;top:980px;width:208px;height:52px;background:#282828;"></div>
<div class="a" style="left:2752px;top:980px;width:88px;height:52px;background:#282828;"></div>
<div class="t " style="left:2389.0px;top:991.9px;font-size:28.0px;color:#c0c0c0;transform:scaleX(0.732);transform-origin:0 0;">Size To Content</div>
<div class="a" style="left:2567px;top:989px;width:33px;height:34px;background:#151515;border:2px solid #2a2a2a;border-radius:5px"></div>
<svg class="a" style="left:2808px;top:994px;" width="24" height="24" viewBox="0 0 24 24"><path d="M12 1 L23 12 L12 23 L1 12z" fill="none" stroke="#3a3a3a" stroke-width="2"/></svg>
<div class="a" style="left:2344px;top:1034px;width:196px;height:52px;background:#282828;"></div>
<div class="a" style="left:2542px;top:1034px;width:208px;height:52px;background:#282828;"></div>
<div class="a" style="left:2752px;top:1034px;width:88px;height:52px;background:#282828;"></div>
<div class="t " style="left:2389.0px;top:1045.9px;font-size:28.0px;color:#c0c0c0;transform:scaleX(0.722);transform-origin:0 0;">ZOrder</div>
<div class="a" style="left:2567px;top:1041.0px;width:177px;height:38px;background:#141414;border:2px solid #333;border-radius:7px"></div>
<div class="t " style="left:2584.0px;top:1047.9px;font-size:24.0px;color:#e0e0e0;transform:scaleX(0.930);transform-origin:0 0;">2</div>
<svg class="a" style="left:2768px;top:1048px;" width="24" height="24" viewBox="0 0 24 24"><path d="M9 2 L2 8 L9 14 M2 8 H14 a7.5 7.5 0 0 1 0 15 H12" fill="none" stroke="#c8c8c8" stroke-width="2.6"/></svg>
<svg class="a" style="left:2808px;top:1048px;" width="24" height="24" viewBox="0 0 24 24"><path d="M12 1 L23 12 L12 23 L1 12z" fill="none" stroke="#3a3a3a" stroke-width="2"/></svg>
<div class="a" style="left:2344px;top:1086px;width:496px;height:52px;background:#2f2f2f;"></div>
<svg class="a" style="left:2354px;top:1107.0px;" width="20" height="11" viewBox="0 0 20 11"><path d="M0 0 L20 0 L10 11z" fill="#8a8a8a"/></svg>
<div class="t " style="left:2389.0px;top:1100.4px;font-size:25.0px;color:#d0d0d0;font-weight:700;transform:scaleX(0.820);transform-origin:0 0;"><span style="-webkit-text-stroke:0.56px #d0d0d0">フィル</span> <span style="-webkit-text-stroke:0.56px #d0d0d0">ルール</span></div>
<div class="a" style="left:2344px;top:1140px;width:196px;height:53px;background:#282828;"></div>
<div class="a" style="left:2542px;top:1140px;width:208px;height:53px;background:#282828;"></div>
<div class="a" style="left:2752px;top:1140px;width:88px;height:53px;background:#282828;"></div>
<svg class="a" style="left:2354px;top:1160.5px;" width="20" height="11" viewBox="0 0 20 11"><path d="M0 0 L20 0 L10 11z" fill="#8a8a8a"/></svg>
<div class="t " style="left:2388.0px;top:1152.4px;font-size:28.0px;color:#c8c8c8;transform:scaleX(0.743);transform-origin:0 0;">Column Fill</div>
<div class="t " style="left:2567.0px;top:1152.4px;font-size:28.0px;color:#c8c8c8;transform:scaleX(0.822);transform-origin:0 0;">3 配列ｴ</div>
<svg class="a" style="left:2655px;top:1151.5px;" width="31" height="31" viewBox="0 0 31 31"><circle cx="15.5" cy="15.5" r="13.5" fill="none" stroke="#c8c8c8" stroke-width="2.6"/><path d="M15.5 8 V23 M8 15.5 H23" stroke="#c8c8c8" stroke-width="3"/></svg>
<svg class="a" style="left:2709px;top:1150.5px;" width="28" height="32" viewBox="0 0 28 32"><path d="M2 6 H26 M10 6 V2 H18 V6" fill="none" stroke="#c8c8c8" stroke-width="3"/><path d="M5 10 H23 L21 30 H7z" fill="none" stroke="#c8c8c8" stroke-width="3.4"/></svg>
<svg class="a" style="left:2808px;top:1154.5px;" width="24" height="24" viewBox="0 0 24 24"><path d="M9 2 L2 8 L9 14 M2 8 H14 a7.5 7.5 0 0 1 0 15 H12" fill="none" stroke="#c8c8c8" stroke-width="2.6"/></svg>
<div class="a" style="left:2344px;top:1195px;width:196px;height:56px;background:#282828;"></div>
<div class="a" style="left:2542px;top:1195px;width:208px;height:56px;background:#282828;"></div>
<div class="a" style="left:2752px;top:1195px;width:88px;height:56px;background:#282828;"></div>
<div class="a" style="left:2344px;top:1193px;width:30px;height:60px;background:#282828;"></div>
<div class="a" style="left:2374px;top:1193px;width:4px;height:60px;background:#1e1e1e;"></div>
<div class="t " style="left:2424.0px;top:1207.9px;font-size:30.0px;color:#9a9a9a;transform:scaleX(0.830);transform-origin:0 0;">インデックス</div>
<div class="a" style="left:2567px;top:1203.0px;width:104px;height:40px;background:#141414;border:2px solid #333;border-radius:7px"></div>
<div class="t " style="left:2584.0px;top:1210.9px;font-size:24.0px;color:#e0e0e0;transform:scaleX(0.930);transform-origin:0 0;">0.0</div>
<svg class="a" style="left:2704px;top:1218px;" width="20" height="12" viewBox="0 0 20 12"><path d="M2 2 l8 8 l8-8" fill="none" stroke="#c6c6c6" stroke-width="3"/></svg>
<svg class="a" style="left:2808px;top:1211px;" width="24" height="24" viewBox="0 0 24 24"><path d="M9 2 L2 8 L9 14 M2 8 H14 a7.5 7.5 0 0 1 0 15 H12" fill="none" stroke="#c8c8c8" stroke-width="2.6"/></svg>
<div class="a" style="left:2344px;top:1252px;width:196px;height:56px;background:#282828;"></div>
<div class="a" style="left:2542px;top:1252px;width:208px;height:56px;background:#282828;"></div>
<div class="a" style="left:2752px;top:1252px;width:88px;height:56px;background:#282828;"></div>
<div class="a" style="left:2344px;top:1250px;width:30px;height:60px;background:#282828;"></div>
<div class="a" style="left:2374px;top:1250px;width:4px;height:60px;background:#1e1e1e;"></div>
<div class="t " style="left:2424.0px;top:1264.9px;font-size:30.0px;color:#9a9a9a;transform:scaleX(0.830);transform-origin:0 0;">インデックス</div>
<div class="a" style="left:2567px;top:1260.0px;width:104px;height:40px;background:#141414;border:2px solid #333;border-radius:7px"></div>
<div class="t " style="left:2584.0px;top:1267.9px;font-size:24.0px;color:#e0e0e0;transform:scaleX(0.930);transform-origin:0 0;">1.0</div>
<svg class="a" style="left:2704px;top:1275px;" width="20" height="12" viewBox="0 0 20 12"><path d="M2 2 l8 8 l8-8" fill="none" stroke="#c6c6c6" stroke-width="3"/></svg>
<svg class="a" style="left:2808px;top:1268px;" width="24" height="24" viewBox="0 0 24 24"><path d="M9 2 L2 8 L9 14 M2 8 H14 a7.5 7.5 0 0 1 0 15 H12" fill="none" stroke="#c8c8c8" stroke-width="2.6"/></svg>
<div class="a" style="left:2344px;top:1310px;width:196px;height:56px;background:#282828;"></div>
<div class="a" style="left:2542px;top:1310px;width:208px;height:56px;background:#282828;"></div>
<div class="a" style="left:2752px;top:1310px;width:88px;height:56px;background:#282828;"></div>
<div class="a" style="left:2344px;top:1308px;width:30px;height:60px;background:#282828;"></div>
<div class="a" style="left:2374px;top:1308px;width:4px;height:60px;background:#1e1e1e;"></div>
<div class="t " style="left:2424.0px;top:1322.9px;font-size:30.0px;color:#9a9a9a;transform:scaleX(0.830);transform-origin:0 0;">インデックス</div>
<div class="a" style="left:2567px;top:1318.0px;width:104px;height:40px;background:#141414;border:2px solid #333;border-radius:7px"></div>
<div class="t " style="left:2584.0px;top:1325.9px;font-size:24.0px;color:#e0e0e0;transform:scaleX(0.930);transform-origin:0 0;">0.0</div>
<svg class="a" style="left:2704px;top:1333px;" width="20" height="12" viewBox="0 0 20 12"><path d="M2 2 l8 8 l8-8" fill="none" stroke="#c6c6c6" stroke-width="3"/></svg>
<svg class="a" style="left:2808px;top:1326px;" width="24" height="24" viewBox="0 0 24 24"><path d="M9 2 L2 8 L9 14 M2 8 H14 a7.5 7.5 0 0 1 0 15 H12" fill="none" stroke="#c8c8c8" stroke-width="2.6"/></svg>
<div class="a" style="left:2344px;top:1367px;width:196px;height:53px;background:#282828;"></div>
<div class="a" style="left:2542px;top:1367px;width:208px;height:53px;background:#282828;"></div>
<div class="a" style="left:2752px;top:1367px;width:88px;height:53px;background:#282828;"></div>
<svg class="a" style="left:2354px;top:1387.5px;" width="20" height="11" viewBox="0 0 20 11"><path d="M0 0 L20 0 L10 11z" fill="#8a8a8a"/></svg>
<div class="t " style="left:2388.0px;top:1379.4px;font-size:28.0px;color:#c8c8c8;transform:scaleX(0.713);transform-origin:0 0;">Row Fill</div>
<div class="t " style="left:2567.0px;top:1379.4px;font-size:28.0px;color:#c8c8c8;transform:scaleX(0.822);transform-origin:0 0;">3 配列ｴ</div>
<svg class="a" style="left:2655px;top:1378.5px;" width="31" height="31" viewBox="0 0 31 31"><circle cx="15.5" cy="15.5" r="13.5" fill="none" stroke="#c8c8c8" stroke-width="2.6"/><path d="M15.5 8 V23 M8 15.5 H23" stroke="#c8c8c8" stroke-width="3"/></svg>
<svg class="a" style="left:2709px;top:1377.5px;" width="28" height="32" viewBox="0 0 28 32"><path d="M2 6 H26 M10 6 V2 H18 V6" fill="none" stroke="#c8c8c8" stroke-width="3"/><path d="M5 10 H23 L21 30 H7z" fill="none" stroke="#c8c8c8" stroke-width="3.4"/></svg>
<svg class="a" style="left:2808px;top:1381.5px;" width="24" height="24" viewBox="0 0 24 24"><path d="M9 2 L2 8 L9 14 M2 8 H14 a7.5 7.5 0 0 1 0 15 H12" fill="none" stroke="#c8c8c8" stroke-width="2.6"/></svg>
<div class="a" style="left:2344px;top:1422px;width:196px;height:56px;background:#282828;"></div>
<div class="a" style="left:2542px;top:1422px;width:208px;height:56px;background:#282828;"></div>
<div class="a" style="left:2752px;top:1422px;width:88px;height:56px;background:#282828;"></div>
<div class="a" style="left:2344px;top:1420px;width:30px;height:60px;background:#282828;"></div>
<div class="a" style="left:2374px;top:1420px;width:4px;height:60px;background:#1e1e1e;"></div>
<div class="t " style="left:2424.0px;top:1434.9px;font-size:30.0px;color:#9a9a9a;transform:scaleX(0.830);transform-origin:0 0;">インデックス</div>
<div class="a" style="left:2567px;top:1430.0px;width:104px;height:40px;background:#141414;border:2px solid #333;border-radius:7px"></div>
<div class="t " style="left:2584.0px;top:1437.9px;font-size:24.0px;color:#e0e0e0;transform:scaleX(0.930);transform-origin:0 0;">0.0</div>
<svg class="a" style="left:2704px;top:1445px;" width="20" height="12" viewBox="0 0 20 12"><path d="M2 2 l8 8 l8-8" fill="none" stroke="#c6c6c6" stroke-width="3"/></svg>
<svg class="a" style="left:2808px;top:1438px;" width="24" height="24" viewBox="0 0 24 24"><path d="M9 2 L2 8 L9 14 M2 8 H14 a7.5 7.5 0 0 1 0 15 H12" fill="none" stroke="#c8c8c8" stroke-width="2.6"/></svg>
<div class="a" style="left:2344px;top:1479px;width:196px;height:56px;background:#282828;"></div>
<div class="a" style="left:2542px;top:1479px;width:208px;height:56px;background:#282828;"></div>
<div class="a" style="left:2752px;top:1479px;width:88px;height:56px;background:#282828;"></div>
<div class="a" style="left:2344px;top:1477px;width:30px;height:60px;background:#282828;"></div>
<div class="a" style="left:2374px;top:1477px;width:4px;height:60px;background:#1e1e1e;"></div>
<div class="t " style="left:2424.0px;top:1491.9px;font-size:30.0px;color:#9a9a9a;transform:scaleX(0.830);transform-origin:0 0;">インデックス</div>
<div class="a" style="left:2567px;top:1487.0px;width:104px;height:40px;background:#141414;border:2px solid #333;border-radius:7px"></div>
<div class="t " style="left:2584.0px;top:1494.9px;font-size:24.0px;color:#e0e0e0;transform:scaleX(0.930);transform-origin:0 0;">1.0</div>
<svg class="a" style="left:2704px;top:1502px;" width="20" height="12" viewBox="0 0 20 12"><path d="M2 2 l8 8 l8-8" fill="none" stroke="#c6c6c6" stroke-width="3"/></svg>
<svg class="a" style="left:2808px;top:1495px;" width="24" height="24" viewBox="0 0 24 24"><path d="M9 2 L2 8 L9 14 M2 8 H14 a7.5 7.5 0 0 1 0 15 H12" fill="none" stroke="#c8c8c8" stroke-width="2.6"/></svg>
<div class="a" style="left:2344px;top:1537px;width:196px;height:56px;background:#282828;"></div>
<div class="a" style="left:2542px;top:1537px;width:208px;height:56px;background:#282828;"></div>
<div class="a" style="left:2752px;top:1537px;width:88px;height:56px;background:#282828;"></div>
<div class="a" style="left:2344px;top:1535px;width:30px;height:60px;background:#282828;"></div>
<div class="a" style="left:2374px;top:1535px;width:4px;height:60px;background:#1e1e1e;"></div>
<div class="t " style="left:2424.0px;top:1549.9px;font-size:30.0px;color:#9a9a9a;transform:scaleX(0.830);transform-origin:0 0;">インデックス</div>
<div class="a" style="left:2567px;top:1545.0px;width:104px;height:40px;background:#141414;border:2px solid #333;border-radius:7px"></div>
<div class="t " style="left:2584.0px;top:1552.9px;font-size:24.0px;color:#e0e0e0;transform:scaleX(0.930);transform-origin:0 0;">0.0</div>
<svg class="a" style="left:2704px;top:1560px;" width="20" height="12" viewBox="0 0 20 12"><path d="M2 2 l8 8 l8-8" fill="none" stroke="#c6c6c6" stroke-width="3"/></svg>
<svg class="a" style="left:2808px;top:1553px;" width="24" height="24" viewBox="0 0 24 24"><path d="M9 2 L2 8 L9 14 M2 8 H14 a7.5 7.5 0 0 1 0 15 H12" fill="none" stroke="#c8c8c8" stroke-width="2.6"/></svg>
<div class="a" style="left:2344px;top:1595px;width:496px;height:53px;background:#2f2f2f;"></div>
<svg class="a" style="left:2354px;top:1616.5px;" width="20" height="11" viewBox="0 0 20 11"><path d="M0 0 L20 0 L10 11z" fill="#8a8a8a"/></svg>
<div class="t " style="left:2389.0px;top:1609.9px;font-size:25.0px;color:#d0d0d0;font-weight:700;transform:scaleX(0.927);transform-origin:0 0;"><span style="-webkit-text-stroke:0.56px #d0d0d0">アクセシビリティ</span></div>
<div class="a" style="left:2344px;top:1650px;width:196px;height:12px;background:#282828;"></div>
<div class="a" style="left:2542px;top:1650px;width:208px;height:12px;background:#282828;"></div>
<div class="a" style="left:2752px;top:1650px;width:88px;height:12px;background:#282828;"></div>
<div class="a" style="left:2px;top:1674px;width:2878px;height:64px;background:#262626;border-radius:0 0 22px 22px"></div>
<div class="a" style="left:312px;top:1674px;width:4px;height:64px;background:#1b1b1b;"></div>
<div class="a" style="left:566px;top:1674px;width:4px;height:64px;background:#1b1b1b;"></div>
<div class="a" style="left:755px;top:1674px;width:4px;height:64px;background:#1b1b1b;"></div>
<div class="a" style="left:1558px;top:1674px;width:4px;height:64px;background:#1b1b1b;"></div>
<div class="a" style="left:2190px;top:1674px;width:4px;height:64px;background:#1b1b1b;"></div>
<div class="a" style="left:2468px;top:1674px;width:4px;height:64px;background:#1b1b1b;"></div>
<svg class="a" style="left:22px;top:1690px;" width="32" height="32" viewBox="0 0 32 32"><path d="M0 2 q0-2 2-2 h9 l4 5 h-15z" fill="#8a8a8a"/><path d="M0 7 h28 v3 a10 10 0 0 0-13 13 l-3 4 h-10 q-2 0-2-2z" fill="#c8c8c8"/><circle cx="22" cy="19" r="6.5" fill="none" stroke="#c8c8c8" stroke-width="3"/><path d="M17 24 l-5 6" stroke="#c8c8c8" stroke-width="3"/></svg>
<div class="t " style="left:63.0px;top:1688.9px;font-size:32.0px;color:#d0d0d0;transform:scaleX(1.000);transform-origin:0 0;">コンテンツ ドロワー</div>
<svg class="a" style="left:335px;top:1690px;" width="32" height="32" viewBox="0 0 32 32"><path d="M2 12 L30 4 L31 9 L3 16z" fill="#c8c8c8"/><rect x="2" y="16" width="29" height="15" fill="#8a8a8a"/><rect x="5" y="20" width="11" height="7" fill="#c8c8c8"/><rect x="18" y="20" width="10" height="7" fill="#c8c8c8"/></svg>
<div class="t " style="left:376.0px;top:1688.9px;font-size:32.0px;color:#d0d0d0;transform:scaleX(1.006);transform-origin:0 0;">アニメーション</div>
<svg class="a" style="left:592px;top:1688px;" width="26" height="34" viewBox="0 0 26 34"><rect x="0" y="4" width="26" height="30" rx="2" fill="#c8c8c8"/><rect x="4" y="0" width="3" height="7" fill="#c8c8c8"/><rect x="11" y="0" width="3" height="7" fill="#c8c8c8"/><rect x="18" y="0" width="3" height="7" fill="#c8c8c8"/><path d="M5 15 l6 4 l-6 4 M13 26 h8" fill="none" stroke="#262626" stroke-width="2.4"/></svg>
<div class="t " style="left:630.0px;top:1688.9px;font-size:32.0px;color:#d0d0d0;transform:scaleX(1.062);transform-origin:0 0;">出力ログ</div>
<svg class="a" style="left:785px;top:1694px;" width="32" height="26" viewBox="0 0 32 26"><rect x="1" y="1" width="30" height="24" fill="none" stroke="#c8c8c8" stroke-width="2.5"/><rect x="1" y="1" width="30" height="5" fill="#c8c8c8"/><path d="M6 11 l6 4 l-6 4 M15 20 h8" fill="none" stroke="#c8c8c8" stroke-width="2.2"/></svg>
<div class="t " style="left:825.0px;top:1690.9px;font-size:30.0px;color:#d0d0d0;transform:scaleX(0.868);transform-origin:0 0;">Cmd</div>
<svg class="a" style="left:895px;top:1700px;" width="20" height="12" viewBox="0 0 20 12"><path d="M2 2 l8 8 l8-8" fill="none" stroke="#c6c6c6" stroke-width="3"/></svg>
<div class="a" style="left:942px;top:1685px;width:597px;height:41px;background:#151515;border:2px solid #2c2c2c;border-radius:7px"></div>
<div class="t " style="left:962.0px;top:1689.9px;font-size:30.0px;color:#6a6a6a;transform:scaleX(0.963);transform-origin:0 0;">コンソールコマンドを入力します</div>
<svg class="a" style="left:2215px;top:1689px;" width="34" height="34" viewBox="0 0 34 34"><path d="M0 2 q0-2 2-2 h20 l6 6 v12 h-28z" fill="#c8c8c8"/><rect x="0" y="16" width="16" height="16" fill="#c8c8c8"/><rect x="4" y="18" width="10" height="9" fill="#8a8a8a"/><rect x="14" y="2" width="5" height="8" fill="#262626"/><path d="M16 24 l5 5 l11-11" fill="none" stroke="#c8c8c8" stroke-width="3.5"/></svg>
<div class="t " style="left:2258.0px;top:1688.9px;font-size:32.0px;color:#d0d0d0;transform:scaleX(1.095);transform-origin:0 0;">すべて保存済み</div>
<svg class="a" style="left:2498px;top:1688px;" width="30" height="36" viewBox="0 0 30 36"><circle cx="6" cy="5" r="4.5" fill="#c8c8c8"/><circle cx="24" cy="6" r="4.5" fill="#c8c8c8"/><circle cx="6" cy="31" r="4.5" fill="#c8c8c8"/><path d="M6 5 V31 M24 6 q0 12-18 16" fill="none" stroke="#c8c8c8" stroke-width="3"/></svg>
<div class="t " style="left:2540.0px;top:1688.9px;font-size:32.0px;color:#d0d0d0;transform:scaleX(1.004);transform-origin:0 0;">リビジョンコントロール</div>
<svg class="a" style="left:2814px;top:1700px;" width="20" height="12" viewBox="0 0 20 12"><path d="M2 2 l8 8 l8-8" fill="none" stroke="#c6c6c6" stroke-width="3"/></svg>
</div>
</body></html>
